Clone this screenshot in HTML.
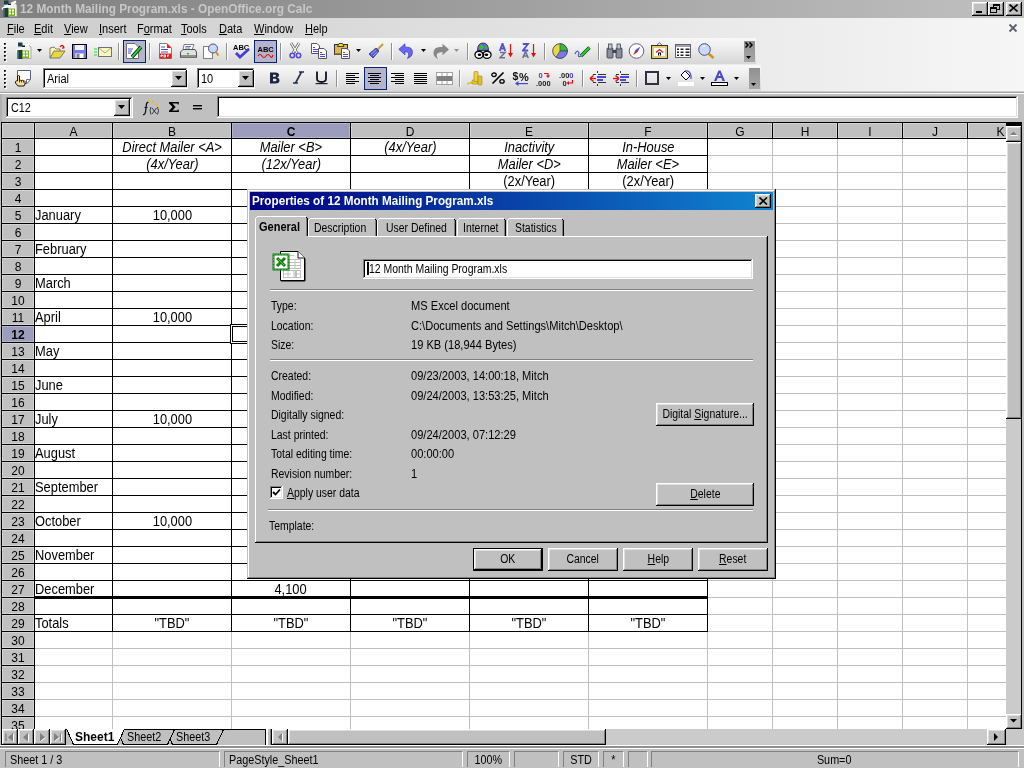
<!DOCTYPE html>
<html><head><meta charset="utf-8"><style>
html,body{margin:0;padding:0;}
body{width:1024px;height:768px;overflow:hidden;position:relative;will-change:transform;background:#c0c0c0;font-family:"Liberation Sans",sans-serif;}
div{box-sizing:border-box;}
.t{position:absolute;white-space:nowrap;font-size:12px;line-height:13px;color:#000;}
.c{position:absolute;white-space:nowrap;font-size:14px;line-height:16px;color:#000;}
u{text-decoration:underline;text-decoration-thickness:1px;text-underline-offset:1px;}
svg{position:absolute;}
</style></head><body>
<div style="position:absolute;left:0px;top:0px;width:1024px;height:18px;background:linear-gradient(to right,#808080,#c0c0c0)"></div><svg style="left:1px;top:0px" width="17" height="17" viewBox="0 0 17 17"><path d="M6 6 L13 2 L16 5 V16.5 H6 Z" fill="#f2f2f2" stroke="#909090" stroke-width="0.7"/><path d="M1 9 L8 5 L15 1.5" stroke="#ffffff" stroke-width="2.2" fill="none"/><path d="M3 6 L9 3.5" stroke="#e8e8e8" stroke-width="1.5"/><rect x="3" y="0.5" width="4.5" height="4" fill="#1c3c4c"/><rect x="7" y="3.5" width="3" height="1.5" fill="#0a1a20"/><rect x="2.5" y="8" width="5" height="9" fill="#1c3c4c"/><rect x="2.5" y="8" width="1.2" height="9" fill="#4a7080"/><rect x="7" y="8.5" width="7" height="7.5" fill="#78b020"/><rect x="8" y="9.5" width="2" height="2" fill="#fff"/><rect x="11" y="9.5" width="2" height="2" fill="#fff"/><rect x="8" y="12.5" width="2" height="2" fill="#fff"/><rect x="11" y="12.5" width="2" height="2" fill="#fff"/></svg><div class="t" style="left:20px;top:2px;transform:scaleX(0.985);transform-origin:0 0;font-weight:bold;color:#c8c8c8;font-size:12px;line-height:14px">12 Month Mailing Program.xls - OpenOffice.org Calc</div><div style="position:absolute;left:972px;top:2px;width:16px;height:14px;background:#000000"></div><div style="position:absolute;left:972px;top:2px;width:15px;height:13px;background:#ffffff"></div><div style="position:absolute;left:973px;top:3px;width:14px;height:12px;background:#808080"></div><div style="position:absolute;left:973px;top:3px;width:13px;height:11px;background:#dfdfdf"></div><div style="position:absolute;left:974px;top:4px;width:12px;height:10px;background:#c0c0c0"></div><div style="position:absolute;left:988px;top:2px;width:16px;height:14px;background:#000000"></div><div style="position:absolute;left:988px;top:2px;width:15px;height:13px;background:#ffffff"></div><div style="position:absolute;left:989px;top:3px;width:14px;height:12px;background:#808080"></div><div style="position:absolute;left:989px;top:3px;width:13px;height:11px;background:#dfdfdf"></div><div style="position:absolute;left:990px;top:4px;width:12px;height:10px;background:#c0c0c0"></div><div style="position:absolute;left:1006px;top:2px;width:16px;height:14px;background:#000000"></div><div style="position:absolute;left:1006px;top:2px;width:15px;height:13px;background:#ffffff"></div><div style="position:absolute;left:1007px;top:3px;width:14px;height:12px;background:#808080"></div><div style="position:absolute;left:1007px;top:3px;width:13px;height:11px;background:#dfdfdf"></div><div style="position:absolute;left:1008px;top:4px;width:12px;height:10px;background:#c0c0c0"></div><div style="position:absolute;left:976px;top:11px;width:6px;height:2px;background:#000"></div><svg style="left:990px;top:4px" width="12" height="10"><rect x="3.5" y="0.5" width="6" height="5" fill="none" stroke="#000"/><rect x="3" y="0" width="7" height="2" fill="#000"/>
<rect x="0.5" y="3.5" width="6" height="5" fill="#c0c0c0" stroke="#000"/><rect x="0" y="3" width="7" height="2" fill="#000"/></svg><svg style="left:1009px;top:4px" width="9" height="8"><path d="M0.5 0.5 L8.5 7.5 M8.5 0.5 L0.5 7.5" stroke="#000" stroke-width="1.6"/></svg><div style="position:absolute;left:0px;top:18px;width:1024px;height:74px;background:linear-gradient(to right,#cccccc,#f6f6f6)"></div><div class="t" style="left:7px;top:23px;transform:scaleX(0.917);transform-origin:0 0;"><u>F</u>ile</div><div class="t" style="left:34px;top:23px;transform:scaleX(0.917);transform-origin:0 0;"><u>E</u>dit</div><div class="t" style="left:64px;top:23px;transform:scaleX(0.917);transform-origin:0 0;"><u>V</u>iew</div><div class="t" style="left:99px;top:23px;transform:scaleX(0.917);transform-origin:0 0;"><u>I</u>nsert</div><div class="t" style="left:137px;top:23px;transform:scaleX(0.917);transform-origin:0 0;">F<u>o</u>rmat</div><div class="t" style="left:181px;top:23px;transform:scaleX(0.917);transform-origin:0 0;"><u>T</u>ools</div><div class="t" style="left:219px;top:23px;transform:scaleX(0.917);transform-origin:0 0;"><u>D</u>ata</div><div class="t" style="left:254px;top:23px;transform:scaleX(0.917);transform-origin:0 0;"><u>W</u>indow</div><div class="t" style="left:305px;top:23px;transform:scaleX(0.917);transform-origin:0 0;"><u>H</u>elp</div><svg style="left:1008px;top:23px" width="10" height="10"><path d="M1.5 1.5 L8.5 8.5 M8.5 1.5 L1.5 8.5" stroke="#5a6070" stroke-width="1.8"/></svg><div style="position:absolute;left:0px;top:38px;width:756px;height:26px;background:linear-gradient(to bottom,#f8f8f8,#f0f0f0 30%,#d6d6d6)"></div><div style="position:absolute;left:0px;top:65px;width:761px;height:26px;background:linear-gradient(to bottom,#f8f8f8,#f0f0f0 30%,#d6d6d6)"></div><div style="position:absolute;left:0px;top:91px;width:1024px;height:1px;background:#d0d0d0"></div><div style="position:absolute;left:0px;top:92px;width:1024px;height:1px;background:#a0a0a0"></div><div style="position:absolute;left:0px;top:93px;width:1024px;height:1px;background:#ffffff"></div><div style="position:absolute;left:5px;top:44px;width:2px;height:2px;background:#ffffff"></div><div style="position:absolute;left:4px;top:43px;width:2px;height:2px;background:#707070"></div><div style="position:absolute;left:4px;top:43px;width:1px;height:1px;background:#000"></div><div style="position:absolute;left:5px;top:43px;width:1px;height:1px;background:#303030"></div><div style="position:absolute;left:4px;top:44px;width:1px;height:1px;background:#303030"></div><div style="position:absolute;left:5px;top:48px;width:2px;height:2px;background:#ffffff"></div><div style="position:absolute;left:4px;top:47px;width:2px;height:2px;background:#707070"></div><div style="position:absolute;left:4px;top:47px;width:1px;height:1px;background:#000"></div><div style="position:absolute;left:5px;top:47px;width:1px;height:1px;background:#303030"></div><div style="position:absolute;left:4px;top:48px;width:1px;height:1px;background:#303030"></div><div style="position:absolute;left:5px;top:52px;width:2px;height:2px;background:#ffffff"></div><div style="position:absolute;left:4px;top:51px;width:2px;height:2px;background:#707070"></div><div style="position:absolute;left:4px;top:51px;width:1px;height:1px;background:#000"></div><div style="position:absolute;left:5px;top:51px;width:1px;height:1px;background:#303030"></div><div style="position:absolute;left:4px;top:52px;width:1px;height:1px;background:#303030"></div><div style="position:absolute;left:5px;top:56px;width:2px;height:2px;background:#ffffff"></div><div style="position:absolute;left:4px;top:55px;width:2px;height:2px;background:#707070"></div><div style="position:absolute;left:4px;top:55px;width:1px;height:1px;background:#000"></div><div style="position:absolute;left:5px;top:55px;width:1px;height:1px;background:#303030"></div><div style="position:absolute;left:4px;top:56px;width:1px;height:1px;background:#303030"></div><div style="position:absolute;left:5px;top:60px;width:2px;height:2px;background:#ffffff"></div><div style="position:absolute;left:4px;top:59px;width:2px;height:2px;background:#707070"></div><div style="position:absolute;left:4px;top:59px;width:1px;height:1px;background:#000"></div><div style="position:absolute;left:5px;top:59px;width:1px;height:1px;background:#303030"></div><div style="position:absolute;left:4px;top:60px;width:1px;height:1px;background:#303030"></div><div style="position:absolute;left:5px;top:71px;width:2px;height:2px;background:#ffffff"></div><div style="position:absolute;left:4px;top:70px;width:2px;height:2px;background:#707070"></div><div style="position:absolute;left:4px;top:70px;width:1px;height:1px;background:#000"></div><div style="position:absolute;left:5px;top:70px;width:1px;height:1px;background:#303030"></div><div style="position:absolute;left:4px;top:71px;width:1px;height:1px;background:#303030"></div><div style="position:absolute;left:5px;top:75px;width:2px;height:2px;background:#ffffff"></div><div style="position:absolute;left:4px;top:74px;width:2px;height:2px;background:#707070"></div><div style="position:absolute;left:4px;top:74px;width:1px;height:1px;background:#000"></div><div style="position:absolute;left:5px;top:74px;width:1px;height:1px;background:#303030"></div><div style="position:absolute;left:4px;top:75px;width:1px;height:1px;background:#303030"></div><div style="position:absolute;left:5px;top:79px;width:2px;height:2px;background:#ffffff"></div><div style="position:absolute;left:4px;top:78px;width:2px;height:2px;background:#707070"></div><div style="position:absolute;left:4px;top:78px;width:1px;height:1px;background:#000"></div><div style="position:absolute;left:5px;top:78px;width:1px;height:1px;background:#303030"></div><div style="position:absolute;left:4px;top:79px;width:1px;height:1px;background:#303030"></div><div style="position:absolute;left:5px;top:83px;width:2px;height:2px;background:#ffffff"></div><div style="position:absolute;left:4px;top:82px;width:2px;height:2px;background:#707070"></div><div style="position:absolute;left:4px;top:82px;width:1px;height:1px;background:#000"></div><div style="position:absolute;left:5px;top:82px;width:1px;height:1px;background:#303030"></div><div style="position:absolute;left:4px;top:83px;width:1px;height:1px;background:#303030"></div><div style="position:absolute;left:5px;top:87px;width:2px;height:2px;background:#ffffff"></div><div style="position:absolute;left:4px;top:86px;width:2px;height:2px;background:#707070"></div><div style="position:absolute;left:4px;top:86px;width:1px;height:1px;background:#000"></div><div style="position:absolute;left:5px;top:86px;width:1px;height:1px;background:#303030"></div><div style="position:absolute;left:4px;top:87px;width:1px;height:1px;background:#303030"></div><div style="position:absolute;left:118px;top:43px;width:1px;height:17px;background:#909090"></div><div style="position:absolute;left:119px;top:43px;width:1px;height:17px;background:#ffffff"></div><div style="position:absolute;left:149px;top:43px;width:1px;height:17px;background:#909090"></div><div style="position:absolute;left:150px;top:43px;width:1px;height:17px;background:#ffffff"></div><div style="position:absolute;left:226px;top:43px;width:1px;height:17px;background:#909090"></div><div style="position:absolute;left:227px;top:43px;width:1px;height:17px;background:#ffffff"></div><div style="position:absolute;left:280px;top:43px;width:1px;height:17px;background:#909090"></div><div style="position:absolute;left:281px;top:43px;width:1px;height:17px;background:#ffffff"></div><div style="position:absolute;left:391px;top:43px;width:1px;height:17px;background:#909090"></div><div style="position:absolute;left:392px;top:43px;width:1px;height:17px;background:#ffffff"></div><div style="position:absolute;left:467px;top:43px;width:1px;height:17px;background:#909090"></div><div style="position:absolute;left:468px;top:43px;width:1px;height:17px;background:#ffffff"></div><div style="position:absolute;left:544px;top:43px;width:1px;height:17px;background:#909090"></div><div style="position:absolute;left:545px;top:43px;width:1px;height:17px;background:#ffffff"></div><div style="position:absolute;left:598px;top:43px;width:1px;height:17px;background:#909090"></div><div style="position:absolute;left:599px;top:43px;width:1px;height:17px;background:#ffffff"></div><div style="position:absolute;left:336px;top:70px;width:1px;height:17px;background:#909090"></div><div style="position:absolute;left:337px;top:70px;width:1px;height:17px;background:#ffffff"></div><div style="position:absolute;left:459px;top:70px;width:1px;height:17px;background:#909090"></div><div style="position:absolute;left:460px;top:70px;width:1px;height:17px;background:#ffffff"></div><div style="position:absolute;left:582px;top:70px;width:1px;height:17px;background:#909090"></div><div style="position:absolute;left:583px;top:70px;width:1px;height:17px;background:#ffffff"></div><div style="position:absolute;left:636px;top:70px;width:1px;height:17px;background:#909090"></div><div style="position:absolute;left:637px;top:70px;width:1px;height:17px;background:#ffffff"></div><div style="position:absolute;left:123px;top:40px;width:23px;height:23px;background:#b4b4cc;border:1px solid #0a246a"></div><div style="position:absolute;left:254px;top:40px;width:23px;height:23px;background:#b4b4cc;border:1px solid #0a246a"></div><div style="position:absolute;left:364px;top:67px;width:23px;height:23px;background:#b4b4cc;border:1px solid #0a246a"></div><svg style="left:15px;top:42px" width="17" height="17" viewBox="0 0 17 17"><path d="M6 6 L13 2 L16 5 V16.5 H6 Z" fill="#f2f2f2" stroke="#909090" stroke-width="0.7"/><path d="M1 9 L8 5 L15 1.5" stroke="#ffffff" stroke-width="2.2" fill="none"/><path d="M3 6 L9 3.5" stroke="#e8e8e8" stroke-width="1.5"/><rect x="3" y="0.5" width="4.5" height="4" fill="#1c3c4c"/><rect x="7" y="3.5" width="3" height="1.5" fill="#0a1a20"/><rect x="2.5" y="8" width="5" height="9" fill="#1c3c4c"/><rect x="2.5" y="8" width="1.2" height="9" fill="#4a7080"/><rect x="7" y="8.5" width="7" height="7.5" fill="#78b020"/><rect x="8" y="9.5" width="2" height="2" fill="#fff"/><rect x="11" y="9.5" width="2" height="2" fill="#fff"/><rect x="8" y="12.5" width="2" height="2" fill="#fff"/><rect x="11" y="12.5" width="2" height="2" fill="#fff"/></svg><svg style="left:37px;top:49px" width="6" height="4"><path d="M0 0 H5 L2.5 3 Z" fill="#000"/></svg><svg style="left:49px;top:44px" width="17" height="15" viewBox="0 0 17 15"><path d="M11 3 Q13 0 15 3" stroke="#e01010" stroke-width="1.3" fill="none"/><path d="M14 2 L16 4 L13 5 Z" fill="#e01010"/><path d="M1 4 L5 3 L7 5 L11 5 L11 8 L1 14 Z" fill="#fff7b0" stroke="#606060" stroke-width="0.8"/><path d="M1 14 L5 7 L16 7 L11 14 Z" fill="#e8d840" stroke="#606060" stroke-width="0.8"/></svg><svg style="left:72px;top:44px" width="15" height="15" viewBox="0 0 15 15"><rect x="0.5" y="0.5" width="14" height="14" fill="#7878f0" stroke="#000"/><rect x="3" y="1" width="9" height="5" fill="#f4f4f4"/><rect x="3" y="9" width="9" height="5" fill="#c0c0c0"/><rect x="5" y="10" width="2" height="4" fill="#808080"/><rect x="8" y="10" width="3" height="4" fill="#fff"/></svg><svg style="left:94px;top:46px" width="18" height="11" viewBox="0 0 18 11"><rect x="4.5" y="1.5" width="13" height="9" fill="#fff8c0" stroke="#707080"/><path d="M5 2 L11 7 L17 2" stroke="#a09060" fill="none" stroke-width="0.8"/><path d="M0 3 H3 M0 6 H3 M0 9 H3" stroke="#20e020" stroke-width="1.2"/></svg><svg style="left:126px;top:43px" width="17" height="16" viewBox="0 0 17 16"><path d="M0.5 0.5 H9 L12.5 4 V15.5 H0.5 Z" fill="#fff" stroke="#707070"/><path d="M2 6 H7 M2 8 H6 M2 10 H5" stroke="#5050d0" stroke-width="1"/><path d="M6 14 L15 4" stroke="#000" stroke-width="3.4"/><path d="M6 14 L15 4" stroke="#30d030" stroke-width="2"/></svg><svg style="left:159px;top:43px" width="13" height="16" viewBox="0 0 13 16"><path d="M0.5 0.5 H8 L12.5 5 V15.5 H0.5 Z" fill="#fff" stroke="#808080"/><path d="M8 0.5 L12.5 5 H8 Z" fill="#e02020"/><path d="M2 4 H6 M2 6.5 H9 M2 9 H9" stroke="#5050d0" stroke-width="1"/><rect x="0.5" y="10.5" width="12" height="5" fill="#e02020"/><path d="M2 14 V12 H3.5 V13 H2 M5 14 V12 H6.5 V14 H5 M8.5 14 V12 H10 M8.5 13 H9.5" stroke="#fff" stroke-width="0.9" fill="none"/></svg><svg style="left:180px;top:44px" width="17" height="15" viewBox="0 0 17 15"><path d="M4 0.5 H14 L12 6 H3 Z" fill="#fff" stroke="#808080"/><path d="M5.5 2.5 H11 M5 4 H10" stroke="#5050d0" stroke-width="0.8"/><path d="M0.5 8 L3 5.5 H15 L16.5 8 V13.5 H0.5 Z" fill="#e0e0e0" stroke="#505050"/><rect x="1" y="11" width="15" height="2.5" fill="#909090"/><rect x="7" y="9" width="2" height="1.5" fill="#20c020"/></svg><svg style="left:203px;top:43px" width="16" height="16" viewBox="0 0 16 16"><rect x="0.5" y="3.5" width="9" height="12" fill="#fff" stroke="#808080"/><circle cx="10" cy="5.5" r="4.5" fill="#c8d8ff" stroke="#505070"/><path d="M13 9 L15.5 12.5" stroke="#d09020" stroke-width="2"/></svg><svg style="left:233px;top:43px" width="17" height="16" viewBox="0 0 17 16"><text x="0" y="6.5" font-family="Liberation Sans" font-weight="bold" font-size="7.5" fill="#000">ABC</text><path d="M3 10 L7 14 L16 6" stroke="#4040e0" stroke-width="2.8" fill="none"/></svg><svg style="left:257px;top:45px" width="17" height="14" viewBox="0 0 17 14"><text x="0.5" y="6.5" font-family="Liberation Sans" font-weight="bold" font-size="7.5" fill="#000">ABC</text><path d="M1 11 Q3 8 5 11 T9 11 T13 11 T16 10" stroke="#e01010" stroke-width="1.2" fill="none"/></svg><svg style="left:289px;top:42px" width="13" height="17" viewBox="0 0 13 17"><path d="M2 1 L8 11 M10 1 L4 11" stroke="#606068" stroke-width="2.6"/><path d="M2 1 L8 11 M10 1 L4 11" stroke="#ffffff" stroke-width="1.2"/><circle cx="3.3" cy="13.5" r="2.2" fill="none" stroke="#5848d0" stroke-width="1.6"/><circle cx="9.5" cy="13.5" r="2.2" fill="none" stroke="#5848d0" stroke-width="1.6"/></svg><svg style="left:310px;top:42px" width="18" height="18" viewBox="0 0 18 18"><path d="M1.5 1.5 H7 L9.5 4 V11.5 H1.5 Z" fill="#fff" stroke="#505868"/><path d="M3 5.5 H5 M3 7.5 H8 M3 9.5 H8" stroke="#5848d0"/><path d="M8.5 6.5 H14 L16.5 9 V16.5 H8.5 Z" fill="#fff" stroke="#505868"/><path d="M10 10.5 H12 M10 12.5 H15 M10 14.5 H15" stroke="#5848d0"/></svg><svg style="left:333px;top:42px" width="18" height="18" viewBox="0 0 18 18"><rect x="1.5" y="2.5" width="13" height="10" fill="#d8b860" stroke="#303030"/><rect x="1.5" y="11" width="13" height="1.5" fill="#a08030"/><path d="M4.5 4.5 H11 L9.5 1.5 H6 Z" fill="#f0e020" stroke="#202020" stroke-width="0.8"/><path d="M8.5 6.5 H14 L16.5 9 V16.5 H8.5 Z" fill="#fff" stroke="#505868"/><path d="M10 10.5 H12 M10 12.5 H15 M10 14.5 H15" stroke="#5848d0"/></svg><svg style="left:356px;top:49px" width="6" height="4"><path d="M0 0 H5 L2.5 3 Z" fill="#000"/></svg><svg style="left:368px;top:43px" width="16" height="16" viewBox="0 0 16 16"><path d="M9 7 L15 1" stroke="#c0a040" stroke-width="2"/><path d="M1 11 L8 5 L11 8 L5 15 Z" fill="#5858e0" stroke="#303070" stroke-width="0.8"/><path d="M3 11 L8 7 M5 13 L9 9" stroke="#c0c0ff" stroke-width="0.7"/></svg><svg style="left:398px;top:43px" width="16" height="17" viewBox="0 0 16 17"><path d="M0.8 6.3 L7 0.8 V4.2 H9 Q14.5 4.2 14.5 9.5 Q14.5 13.5 9.5 15.5 Q11.3 12.5 10.5 10.3 Q9.5 8.5 7 8.5 V11.8 Z" fill="#6868f4" stroke="#3a3ab0" stroke-width="0.7"/></svg><svg style="left:421px;top:49px" width="6" height="4"><path d="M0 0 H5 L2.5 3 Z" fill="#000"/></svg><svg style="left:432px;top:43px" width="18" height="17" viewBox="0 0 18 17"><path d="M17 6.5 L10.5 0.8 V4 H8 Q1.5 4 1.5 10 Q1.5 14 6.5 16 Q4.5 12.5 5.8 10.5 Q7 9 10.5 9 V12.2 Z" fill="#888888"/><path d="M6.3 15.5 Q4.5 12.5 5.8 10.5" stroke="#fff" stroke-width="0.8" fill="none"/></svg><svg style="left:454px;top:49px" width="6" height="4"><path d="M0 0 H5 L2.5 3 Z" fill="#909090"/></svg><svg style="left:474px;top:42px" width="18" height="18" viewBox="0 0 18 18"><path d="M3.5 8.5 Q3.5 1 9 1 Q14.5 1 14.5 8.5 Z" fill="#7060d8" stroke="#202020" stroke-width="0.8"/><path d="M5 7 Q5 3 8 2.5 L10 5 L8 7.5 Z M11 2.5 Q13 4 13.5 6 L11.5 7" fill="#20d020"/><ellipse cx="5" cy="12.8" rx="4.7" ry="4.2" fill="#000"/><ellipse cx="13" cy="12.8" rx="4.7" ry="4.2" fill="#000"/><ellipse cx="5" cy="12.8" rx="3.4" ry="2.9" fill="#fff"/><ellipse cx="13" cy="12.8" rx="3.4" ry="2.9" fill="#fff"/><ellipse cx="5.5" cy="12.8" rx="1.8" ry="1.2" fill="#000"/><ellipse cx="12.5" cy="12.8" rx="1.8" ry="1.2" fill="#000"/><path d="M8 11 L10 12.8 L8 14.6" stroke="#000" stroke-width="1.2" fill="none"/></svg><svg style="left:499px;top:43px" width="15" height="16" viewBox="0 0 15 16"><path d="M0.8 8 L3.5 0.5 L6.2 8 M1.8 5.5 H5.2" stroke="#5050d0" stroke-width="1.8" fill="none"/><path d="M1 9.5 H6 L1 14.8 H6" stroke="#707090" stroke-width="1.6" fill="none"/><path d="M11.5 1 V12" stroke="#e01010" stroke-width="1.2"/><path d="M9 10 L11.5 14.5 L14 10 Z" fill="#e01010"/></svg><svg style="left:522px;top:43px" width="15" height="16" viewBox="0 0 15 16"><path d="M0.8 1 H6 L1 7.5 H6.2" stroke="#5050d0" stroke-width="1.8" fill="none"/><path d="M0.8 15 L3.5 8.5 L6.2 15 M1.8 13 H5.2" stroke="#707090" stroke-width="1.6" fill="none"/><path d="M11.5 1 V12" stroke="#e01010" stroke-width="1.2"/><path d="M9 10 L11.5 14.5 L14 10 Z" fill="#e01010"/></svg><svg style="left:552px;top:43px" width="16" height="16" viewBox="0 0 16 16"><circle cx="8" cy="8" r="7.3" fill="#e8d840" stroke="#404060" stroke-width="0.9"/><path d="M8 8 V0.7 A7.3 7.3 0 0 1 15.3 8 Z" fill="#30c030" stroke="#404060" stroke-width="0.7"/><path d="M8 8 H15.3 A7.3 7.3 0 0 1 4 14.2 Z" fill="#7878e8" stroke="#404060" stroke-width="0.7"/></svg><svg style="left:574px;top:45px" width="17" height="14" viewBox="0 0 17 14"><path d="M1 9 Q3 4 5 8 Q3 13 7 11" stroke="#5050d0" stroke-width="1.2" fill="none"/><path d="M7 11 L15.5 2.5" stroke="#104010" stroke-width="3.4"/><path d="M7 11 L15.5 2.5" stroke="#30d030" stroke-width="2"/></svg><svg style="left:606px;top:43px" width="17" height="16" viewBox="0 0 17 16"><rect x="1" y="5" width="6" height="10" rx="1" fill="#8890a0" stroke="#303040" stroke-width="0.8"/><rect x="10" y="5" width="6" height="10" rx="1" fill="#8890a0" stroke="#303040" stroke-width="0.8"/><rect x="2.5" y="1" width="3.5" height="5" fill="#c0c8d0" stroke="#303040" stroke-width="0.7"/><rect x="11" y="1" width="3.5" height="5" fill="#c0c8d0" stroke="#303040" stroke-width="0.7"/><rect x="6.5" y="7" width="4" height="3" fill="#404050"/></svg><svg style="left:628px;top:43px" width="17" height="16" viewBox="0 0 17 16"><circle cx="8.5" cy="8" r="7.3" fill="#fff" stroke="#606080" stroke-width="1"/><path d="M12 4 L9.5 9 L5 12 L7.5 7 Z" fill="#e02020"/><path d="M12 4 L7.5 7 L9.5 9 Z" fill="#4060e0"/></svg><svg style="left:651px;top:42px" width="17" height="17" viewBox="0 0 17 17"><path d="M5.5 3.5 L8.5 0.8 L11.5 3.5" stroke="#404040" fill="none" stroke-width="0.8"/><rect x="0.5" y="3.5" width="16" height="13" fill="#e0cc70" stroke="#303030"/><rect x="3" y="6" width="11" height="8" fill="#fff"/><path d="M5 10.5 L8.5 7.5 L12 10.5" stroke="#e02020" stroke-width="1.3" fill="none"/><rect x="7" y="10.5" width="3" height="3" fill="#000"/><rect x="8" y="11.5" width="1" height="2" fill="#fff"/></svg><svg style="left:675px;top:44px" width="16" height="14" viewBox="0 0 16 14"><rect x="0.5" y="0.5" width="15" height="13" fill="#fff" stroke="#606070"/><rect x="1" y="1" width="14" height="2" fill="#a0a0b0"/><rect x="2" y="4.5" width="2" height="1.5" fill="#202020"/><rect x="5.5" y="4.5" width="3" height="1.5" fill="#202020"/><rect x="10.5" y="4.5" width="4" height="1.5" fill="#202020"/><rect x="2" y="7.5" width="2" height="1.5" fill="#202020"/><rect x="5.5" y="7.5" width="3" height="1.5" fill="#202020"/><rect x="10.5" y="7.5" width="4" height="1.5" fill="#202020"/><rect x="2" y="10.5" width="2" height="1.5" fill="#202020"/><rect x="5.5" y="10.5" width="3" height="1.5" fill="#202020"/><rect x="10.5" y="10.5" width="4" height="1.5" fill="#202020"/></svg><svg style="left:698px;top:43px" width="17" height="16" viewBox="0 0 17 16"><circle cx="6.5" cy="6.5" r="5.8" fill="#c8d8ff" stroke="#505070" stroke-width="1"/><path d="M4 4 Q5 3 7 3" stroke="#fff" stroke-width="1" fill="none"/><path d="M10.5 10.5 L15.5 15" stroke="#d09020" stroke-width="2.4"/></svg><div style="position:absolute;left:744px;top:41px;width:11px;height:21px;background:linear-gradient(to bottom,#909090,#a8a8a8)"></div><svg style="left:745px;top:42px" width="9" height="6" viewBox="0 0 9 6"><path d="M0.5 0.5 L3 3 L0.5 5.5 M4.5 0.5 L7 3 L4.5 5.5" stroke="#000" stroke-width="1.5" fill="none"/></svg><svg style="left:746px;top:56px" width="6" height="4"><path d="M0 0 H5 L2.5 3 Z" fill="#000"/></svg><div style="position:absolute;left:749px;top:68px;width:11px;height:21px;background:linear-gradient(to bottom,#909090,#a8a8a8)"></div><svg style="left:751px;top:83px" width="6" height="4"><path d="M0 0 H5 L2.5 3 Z" fill="#000"/></svg><svg style="left:14px;top:69px" width="18" height="18" viewBox="0 0 18 18"><path d="M3.5 1.5 H16.5 V10.5 L13 14.5 H10" fill="#fff" stroke="#5a6078" stroke-width="1"/><path d="M3.5 1.5 V9" stroke="#5a6078" stroke-width="1"/><rect x="4" y="2" width="12" height="9" fill="#fff"/><path d="M12.5 14 V10.5 H16" fill="#fff" stroke="#5a6078" stroke-width="0.9"/><path d="M3.5 7 Q4.5 6 5.5 7 V11.5 Q6.5 11 7.5 11.5 Q8.5 11 9.5 11.8 Q10.5 11.5 11 12.5 V15 L10 17 H4 L1.5 14 V12.5 Q2 11.5 3.5 12 Z" fill="#f8e098" stroke="#000" stroke-width="0.9"/><path d="M5.5 11.5 V13.5 M7.5 11.5 V13.5 M9.5 11.8 V13.5" stroke="#000" stroke-width="0.7"/></svg><div style="position:absolute;left:43px;top:68px;width:145px;height:21px;background:#ffffff"></div><div style="position:absolute;left:43px;top:68px;width:144px;height:20px;background:#808080"></div><div style="position:absolute;left:44px;top:69px;width:143px;height:19px;background:#dfdfdf"></div><div style="position:absolute;left:44px;top:69px;width:142px;height:18px;background:#000000"></div><div style="position:absolute;left:45px;top:70px;width:141px;height:17px;background:#ffffff"></div><div class="t" style="left:47px;top:73px;transform:scaleX(0.917);transform-origin:0 0;font-size:12px">Arial</div><div style="position:absolute;left:171px;top:70px;width:16px;height:17px;background:#000000"></div><div style="position:absolute;left:171px;top:70px;width:15px;height:16px;background:#ffffff"></div><div style="position:absolute;left:172px;top:71px;width:14px;height:15px;background:#808080"></div><div style="position:absolute;left:172px;top:71px;width:13px;height:14px;background:#dfdfdf"></div><div style="position:absolute;left:173px;top:72px;width:12px;height:13px;background:#c0c0c0"></div><svg style="left:175px;top:76px" width="7" height="4" viewBox="0 0 7 4"><path d="M0 0 H7 L3.5 4 Z" fill="#000"/></svg><div style="position:absolute;left:197px;top:68px;width:58px;height:21px;background:#ffffff"></div><div style="position:absolute;left:197px;top:68px;width:57px;height:20px;background:#808080"></div><div style="position:absolute;left:198px;top:69px;width:56px;height:19px;background:#dfdfdf"></div><div style="position:absolute;left:198px;top:69px;width:55px;height:18px;background:#000000"></div><div style="position:absolute;left:199px;top:70px;width:54px;height:17px;background:#ffffff"></div><div class="t" style="left:201px;top:73px;transform:scaleX(0.917);transform-origin:0 0;font-size:12px">10</div><div style="position:absolute;left:238px;top:70px;width:16px;height:17px;background:#000000"></div><div style="position:absolute;left:238px;top:70px;width:15px;height:16px;background:#ffffff"></div><div style="position:absolute;left:239px;top:71px;width:14px;height:15px;background:#808080"></div><div style="position:absolute;left:239px;top:71px;width:13px;height:14px;background:#dfdfdf"></div><div style="position:absolute;left:240px;top:72px;width:12px;height:13px;background:#c0c0c0"></div><svg style="left:242px;top:76px" width="7" height="4" viewBox="0 0 7 4"><path d="M0 0 H7 L3.5 4 Z" fill="#000"/></svg><svg style="left:270px;top:72px" width="10" height="12" viewBox="0 0 10 12"><path d="M0 0.5 H5.5 Q9 0.5 9 3 Q9 5 7 5.5 Q9.5 6 9.5 8.3 Q9.5 11.5 5.5 11.5 H0 Z M3 2.7 V4.7 H5 Q6 4.7 6 3.7 Q6 2.7 5 2.7 Z M3 6.8 V9.3 H5.3 Q6.5 9.3 6.5 8 Q6.5 6.8 5.3 6.8 Z" fill="#1c2440" fill-rule="evenodd"/></svg><svg style="left:292px;top:71px" width="13" height="13" viewBox="0 0 13 13"><path d="M7 1 H12 M1 12 H6 M9.5 1 L3.5 12" stroke="#283050" stroke-width="1.6" fill="none"/></svg><svg style="left:315px;top:71px" width="13" height="14" viewBox="0 0 13 14"><path d="M2 0.5 V7.5 Q2 11 6.5 11 Q11 11 11 7.5 V0.5" stroke="#101020" stroke-width="1.8" fill="none"/><rect x="0.5" y="12" width="12" height="1.2" fill="#202030"/></svg><svg style="left:346px;top:73px" width="14" height="11" viewBox="0 0 14 11"><rect x="0" y="0" width="13" height="1" fill="#000"/><rect x="0" y="2" width="9" height="1" fill="#000"/><rect x="0" y="4" width="13" height="1" fill="#000"/><rect x="0" y="6" width="9" height="1" fill="#000"/><rect x="0" y="8" width="13" height="1" fill="#000"/><rect x="0" y="10" width="9" height="1" fill="#000"/></svg><svg style="left:368px;top:73px" width="14" height="11" viewBox="0 0 14 11"><rect x="0" y="0" width="13" height="1" fill="#000"/><rect x="2" y="2" width="9" height="1" fill="#000"/><rect x="0" y="4" width="13" height="1" fill="#000"/><rect x="2" y="6" width="9" height="1" fill="#000"/><rect x="0" y="8" width="13" height="1" fill="#000"/><rect x="2" y="10" width="9" height="1" fill="#000"/></svg><svg style="left:391px;top:73px" width="14" height="11" viewBox="0 0 14 11"><rect x="0" y="0" width="13" height="1" fill="#000"/><rect x="4" y="2" width="9" height="1" fill="#000"/><rect x="0" y="4" width="13" height="1" fill="#000"/><rect x="4" y="6" width="9" height="1" fill="#000"/><rect x="0" y="8" width="13" height="1" fill="#000"/><rect x="4" y="10" width="9" height="1" fill="#000"/></svg><svg style="left:414px;top:73px" width="14" height="11" viewBox="0 0 14 11"><rect x="0" y="0" width="13" height="1" fill="#000"/><rect x="0" y="2" width="13" height="1" fill="#000"/><rect x="0" y="4" width="13" height="1" fill="#000"/><rect x="0" y="6" width="13" height="1" fill="#000"/><rect x="0" y="8" width="13" height="1" fill="#000"/><rect x="0" y="10" width="13" height="1" fill="#000"/></svg><svg style="left:436px;top:72px" width="17" height="13" viewBox="0 0 17 13"><rect x="0.5" y="0.5" width="16" height="12" fill="#fff" stroke="#a0a0a0"/><rect x="1" y="4" width="15" height="5" fill="#808080"/><path d="M6 1 V4 M11 1 V4 M6 9 V12 M11 9 V12" stroke="#a0a0a0"/></svg><svg style="left:467px;top:71px" width="16" height="15" viewBox="0 0 16 15"><path d="M0 13 Q4 11 8 12" stroke="#e0c020" stroke-width="1.5" fill="none"/><rect x="5" y="9" width="6" height="4" rx="1" fill="#e8c830" stroke="#a08010" stroke-width="0.6"/><rect x="7" y="0.5" width="4" height="10" rx="1" fill="#f0d040" stroke="#a08010" stroke-width="0.6"/><rect x="11" y="5" width="4" height="9" rx="1" fill="#e0c030" stroke="#a08010" stroke-width="0.6"/></svg><svg style="left:491px;top:72px" width="14" height="12" viewBox="0 0 14 12"><ellipse cx="3" cy="2.8" rx="2.2" ry="1.8" fill="none" stroke="#000" stroke-width="1.3"/><ellipse cx="11" cy="9.4" rx="2.2" ry="1.8" fill="none" stroke="#000" stroke-width="1.3"/><path d="M12.5 0.5 L1.5 11.5" stroke="#000" stroke-width="1.6"/></svg><svg style="left:512px;top:71px" width="18" height="15" viewBox="0 0 18 15"><text x="0.5" y="9" font-family="Liberation Sans" font-size="10.5" font-weight="bold" fill="#101010">$</text><text x="7" y="9.5" font-family="Liberation Sans" font-size="11" font-weight="bold" fill="#101010">%</text><rect x="4" y="12" width="12" height="1.2" fill="#4848d0"/><path d="M3 12.6 L6.5 10 V15 Z" fill="#4848d0"/></svg><svg style="left:536px;top:71px" width="16" height="16" viewBox="0 0 16 16"><text x="2.5" y="7" font-family="Liberation Sans" font-weight="bold" font-size="7.5" fill="#4040e0">0</text><path d="M8 2.5 H12 V5" stroke="#e01010" stroke-width="1.2" fill="none"/><path d="M10 4.5 H14 L12 7 Z" fill="#e01010"/><text x="0" y="15" font-family="Liberation Sans" font-weight="bold" font-size="7.5" fill="#202020">.000</text></svg><svg style="left:559px;top:71px" width="16" height="16" viewBox="0 0 16 16"><text x="0" y="7" font-family="Liberation Sans" font-weight="bold" font-size="7.5" fill="#202020">.00</text><text x="10.3" y="7" font-family="Liberation Sans" font-weight="bold" font-size="7.5" fill="#4040e0">0</text><text x="3.5" y="15" font-family="Liberation Sans" font-weight="bold" font-size="7.5" fill="#202020">0</text><path d="M13.5 9 V12 H9" stroke="#e01010" stroke-width="1.2" fill="none"/><path d="M10 10 V14 L7.5 12 Z" fill="#e01010"/></svg><svg style="left:589px;top:70px" width="18" height="17" viewBox="0 0 18 17"><rect x="8" y="1" width="1" height="2" fill="#303040"/><rect x="8" y="14" width="1" height="2" fill="#303040"/><rect x="4" y="4" width="3" height="1" fill="#303040"/><rect x="9" y="4" width="8" height="1" fill="#303040"/><rect x="8" y="6" width="9" height="2" fill="#4848e0"/><rect x="8" y="9" width="6" height="2" fill="#4848e0"/><rect x="4" y="12" width="3" height="1" fill="#303040"/><rect x="9" y="12" width="8" height="1" fill="#303040"/><path d="M1 8.5 L4.5 5.5 M1 8.5 L4.5 11.5" stroke="#e01010" stroke-width="1.5" fill="none"/><rect x="2" y="7.8" width="5" height="1.4" fill="#e01010"/></svg><svg style="left:612px;top:70px" width="18" height="17" viewBox="0 0 18 17"><rect x="8" y="1" width="1" height="2" fill="#303040"/><rect x="8" y="14" width="1" height="2" fill="#303040"/><rect x="4" y="4" width="3" height="1" fill="#303040"/><rect x="9" y="4" width="8" height="1" fill="#303040"/><rect x="8" y="6" width="9" height="2" fill="#4848e0"/><rect x="8" y="9" width="6" height="2" fill="#4848e0"/><rect x="4" y="12" width="3" height="1" fill="#303040"/><rect x="9" y="12" width="8" height="1" fill="#303040"/><path d="M7 8.5 L3.5 5.5 M7 8.5 L3.5 11.5" stroke="#e01010" stroke-width="1.5" fill="none"/><rect x="1" y="7.8" width="5" height="1.4" fill="#e01010"/></svg><svg style="left:645px;top:71px" width="14" height="14" viewBox="0 0 14 14"><rect x="1" y="1" width="12" height="12" fill="none" stroke="#303040" stroke-width="2"/></svg><svg style="left:666px;top:77px" width="6" height="4"><path d="M0 0 H5 L2.5 3 Z" fill="#000"/></svg><svg style="left:678px;top:70px" width="17" height="16" viewBox="0 0 17 16"><path d="M3 5 L7 1 L12 6 L8 10 Z" fill="#fff" stroke="#000" stroke-width="1"/><path d="M7 1 Q12 0 13 6 V9" stroke="#5050d0" stroke-width="1.3" fill="none"/><rect x="0" y="12" width="16" height="4" fill="#fff"/></svg><svg style="left:700px;top:77px" width="6" height="4"><path d="M0 0 H5 L2.5 3 Z" fill="#000"/></svg><svg style="left:711px;top:70px" width="17" height="16" viewBox="0 0 17 16"><path d="M3 11 L7.5 0.5 H9.5 L14 11 H11.5 L10.3 8 H6.7 L5.5 11 Z M7.4 6 H9.6 L8.5 3 Z" fill="#4848c8" fill-rule="evenodd"/><rect x="0.5" y="12.5" width="16" height="3" fill="#fff" stroke="#000"/></svg><svg style="left:734px;top:77px" width="6" height="4"><path d="M0 0 H5 L2.5 3 Z" fill="#000"/></svg><div style="position:absolute;left:0px;top:94px;width:1024px;height:28px;background:#c0c0c0"></div><div style="position:absolute;left:0px;top:94px;width:2px;height:28px;background:#b0b0b0"></div><div style="position:absolute;left:6px;top:97px;width:127px;height:21px;background:#ffffff"></div><div style="position:absolute;left:6px;top:97px;width:126px;height:20px;background:#808080"></div><div style="position:absolute;left:7px;top:98px;width:125px;height:19px;background:#dfdfdf"></div><div style="position:absolute;left:7px;top:98px;width:124px;height:18px;background:#000000"></div><div style="position:absolute;left:8px;top:99px;width:123px;height:17px;background:#ffffff"></div><div class="t" style="left:11px;top:102px;transform:scaleX(0.9);transform-origin:0 0;font-size:12px">C12</div><div style="position:absolute;left:114px;top:99px;width:16px;height:17px;background:#000000"></div><div style="position:absolute;left:114px;top:99px;width:15px;height:16px;background:#ffffff"></div><div style="position:absolute;left:115px;top:100px;width:14px;height:15px;background:#808080"></div><div style="position:absolute;left:115px;top:100px;width:13px;height:14px;background:#dfdfdf"></div><div style="position:absolute;left:116px;top:101px;width:12px;height:13px;background:#c0c0c0"></div><svg style="left:118px;top:105px" width="7" height="4" viewBox="0 0 7 4"><path d="M0 0 H7 L3.5 4 Z" fill="#000"/></svg><svg style="left:142px;top:99px" width="18" height="17" viewBox="0 0 18 17"><path d="M1 15.5 Q3 16 3.5 13 L4.5 5 Q5 3 6.5 3.5" stroke="#101020" stroke-width="1.3" fill="none"/><path d="M2.5 8.5 H5.5" stroke="#101020" stroke-width="1"/><path d="M9 8 Q7 11.5 9 15.5 M15.5 8 Q17.5 11.5 15.5 15.5 M10 9 L14.5 15 M14.5 9 L10 15" stroke="#303850" stroke-width="1" fill="none"/><path d="M5.5 1.5 h2 M6.5 0.5 v2 M9.5 2.5 h2 M10.5 1.5 v2 M13.5 5.5 h2 M14.5 4.5 v2" stroke="#f8b010" stroke-width="1"/><rect x="16" y="8" width="1" height="1.5" fill="#f8b010"/></svg><svg style="left:169px;top:102px" width="10" height="10" viewBox="0 0 10 10"><path d="M0 0.7 H9.5 M0 9.3 H9.5" stroke="#000" stroke-width="1.4"/><path d="M9.2 0 V2.5 M9.2 7.5 V10" stroke="#000" stroke-width="1"/><path d="M1 0.5 L5 5 L1 9.5" stroke="#000" stroke-width="2.4" fill="none"/></svg><div style="position:absolute;left:193px;top:105px;width:9px;height:1px;background:#000"></div><div style="position:absolute;left:193px;top:106px;width:9px;height:1px;background:#707070"></div><div style="position:absolute;left:193px;top:108px;width:9px;height:1px;background:#000"></div><div style="position:absolute;left:193px;top:109px;width:9px;height:1px;background:#707070"></div><div style="position:absolute;left:217px;top:96px;width:801px;height:22px;background:#ffffff"></div><div style="position:absolute;left:217px;top:96px;width:800px;height:21px;background:#808080"></div><div style="position:absolute;left:218px;top:97px;width:799px;height:20px;background:#dfdfdf"></div><div style="position:absolute;left:218px;top:97px;width:798px;height:19px;background:#000000"></div><div style="position:absolute;left:219px;top:98px;width:797px;height:18px;background:#ffffff"></div><div style="position:absolute;left:0px;top:122px;width:1024px;height:607px;background:#ffffff"></div><div style="position:absolute;left:0px;top:122px;width:2px;height:607px;background:#c0c0c0"></div><div style="position:absolute;left:1px;top:122px;width:1005px;height:1px;background:#000"></div><div style="position:absolute;left:1px;top:122px;width:1px;height:607px;background:#000"></div><div style="position:absolute;left:2px;top:123px;width:1004px;height:15px;background:#c0c0c0"></div><div style="position:absolute;left:232px;top:123px;width:118px;height:15px;background:#9c9cbc"></div><div style="position:absolute;left:2px;top:138px;width:32px;height:591px;background:#c0c0c0"></div><div style="position:absolute;left:2px;top:326px;width:32px;height:16px;background:#9c9cbc"></div><div style="position:absolute;left:34px;top:155px;width:972px;height:1px;background:#c0c0c0"></div><div style="position:absolute;left:34px;top:172px;width:972px;height:1px;background:#c0c0c0"></div><div style="position:absolute;left:34px;top:189px;width:972px;height:1px;background:#c0c0c0"></div><div style="position:absolute;left:34px;top:206px;width:972px;height:1px;background:#c0c0c0"></div><div style="position:absolute;left:34px;top:223px;width:972px;height:1px;background:#c0c0c0"></div><div style="position:absolute;left:34px;top:240px;width:972px;height:1px;background:#c0c0c0"></div><div style="position:absolute;left:34px;top:257px;width:972px;height:1px;background:#c0c0c0"></div><div style="position:absolute;left:34px;top:274px;width:972px;height:1px;background:#c0c0c0"></div><div style="position:absolute;left:34px;top:291px;width:972px;height:1px;background:#c0c0c0"></div><div style="position:absolute;left:34px;top:308px;width:972px;height:1px;background:#c0c0c0"></div><div style="position:absolute;left:34px;top:325px;width:972px;height:1px;background:#c0c0c0"></div><div style="position:absolute;left:34px;top:342px;width:972px;height:1px;background:#c0c0c0"></div><div style="position:absolute;left:34px;top:359px;width:972px;height:1px;background:#c0c0c0"></div><div style="position:absolute;left:34px;top:376px;width:972px;height:1px;background:#c0c0c0"></div><div style="position:absolute;left:34px;top:393px;width:972px;height:1px;background:#c0c0c0"></div><div style="position:absolute;left:34px;top:410px;width:972px;height:1px;background:#c0c0c0"></div><div style="position:absolute;left:34px;top:427px;width:972px;height:1px;background:#c0c0c0"></div><div style="position:absolute;left:34px;top:444px;width:972px;height:1px;background:#c0c0c0"></div><div style="position:absolute;left:34px;top:461px;width:972px;height:1px;background:#c0c0c0"></div><div style="position:absolute;left:34px;top:478px;width:972px;height:1px;background:#c0c0c0"></div><div style="position:absolute;left:34px;top:495px;width:972px;height:1px;background:#c0c0c0"></div><div style="position:absolute;left:34px;top:512px;width:972px;height:1px;background:#c0c0c0"></div><div style="position:absolute;left:34px;top:529px;width:972px;height:1px;background:#c0c0c0"></div><div style="position:absolute;left:34px;top:546px;width:972px;height:1px;background:#c0c0c0"></div><div style="position:absolute;left:34px;top:563px;width:972px;height:1px;background:#c0c0c0"></div><div style="position:absolute;left:34px;top:580px;width:972px;height:1px;background:#c0c0c0"></div><div style="position:absolute;left:34px;top:597px;width:972px;height:1px;background:#c0c0c0"></div><div style="position:absolute;left:34px;top:614px;width:972px;height:1px;background:#c0c0c0"></div><div style="position:absolute;left:34px;top:631px;width:972px;height:1px;background:#c0c0c0"></div><div style="position:absolute;left:34px;top:648px;width:972px;height:1px;background:#c0c0c0"></div><div style="position:absolute;left:34px;top:665px;width:972px;height:1px;background:#c0c0c0"></div><div style="position:absolute;left:34px;top:682px;width:972px;height:1px;background:#c0c0c0"></div><div style="position:absolute;left:34px;top:699px;width:972px;height:1px;background:#c0c0c0"></div><div style="position:absolute;left:34px;top:716px;width:972px;height:1px;background:#c0c0c0"></div><div style="position:absolute;left:112px;top:138px;width:1px;height:591px;background:#c0c0c0"></div><div style="position:absolute;left:231px;top:138px;width:1px;height:591px;background:#c0c0c0"></div><div style="position:absolute;left:350px;top:138px;width:1px;height:591px;background:#c0c0c0"></div><div style="position:absolute;left:469px;top:138px;width:1px;height:591px;background:#c0c0c0"></div><div style="position:absolute;left:588px;top:138px;width:1px;height:591px;background:#c0c0c0"></div><div style="position:absolute;left:707px;top:138px;width:1px;height:591px;background:#c0c0c0"></div><div style="position:absolute;left:772px;top:138px;width:1px;height:591px;background:#c0c0c0"></div><div style="position:absolute;left:837px;top:138px;width:1px;height:591px;background:#c0c0c0"></div><div style="position:absolute;left:902px;top:138px;width:1px;height:591px;background:#c0c0c0"></div><div style="position:absolute;left:967px;top:138px;width:1px;height:591px;background:#c0c0c0"></div><div style="position:absolute;left:34px;top:138px;width:674px;height:1px;background:#000"></div><div style="position:absolute;left:34px;top:155px;width:674px;height:1px;background:#000"></div><div style="position:absolute;left:34px;top:172px;width:674px;height:1px;background:#000"></div><div style="position:absolute;left:34px;top:189px;width:674px;height:1px;background:#000"></div><div style="position:absolute;left:34px;top:206px;width:674px;height:1px;background:#000"></div><div style="position:absolute;left:34px;top:223px;width:674px;height:1px;background:#000"></div><div style="position:absolute;left:34px;top:240px;width:674px;height:1px;background:#000"></div><div style="position:absolute;left:34px;top:257px;width:674px;height:1px;background:#000"></div><div style="position:absolute;left:34px;top:274px;width:674px;height:1px;background:#000"></div><div style="position:absolute;left:34px;top:291px;width:674px;height:1px;background:#000"></div><div style="position:absolute;left:34px;top:308px;width:674px;height:1px;background:#000"></div><div style="position:absolute;left:34px;top:325px;width:674px;height:1px;background:#000"></div><div style="position:absolute;left:34px;top:342px;width:674px;height:1px;background:#000"></div><div style="position:absolute;left:34px;top:359px;width:674px;height:1px;background:#000"></div><div style="position:absolute;left:34px;top:376px;width:674px;height:1px;background:#000"></div><div style="position:absolute;left:34px;top:393px;width:674px;height:1px;background:#000"></div><div style="position:absolute;left:34px;top:410px;width:674px;height:1px;background:#000"></div><div style="position:absolute;left:34px;top:427px;width:674px;height:1px;background:#000"></div><div style="position:absolute;left:34px;top:444px;width:674px;height:1px;background:#000"></div><div style="position:absolute;left:34px;top:461px;width:674px;height:1px;background:#000"></div><div style="position:absolute;left:34px;top:478px;width:674px;height:1px;background:#000"></div><div style="position:absolute;left:34px;top:495px;width:674px;height:1px;background:#000"></div><div style="position:absolute;left:34px;top:512px;width:674px;height:1px;background:#000"></div><div style="position:absolute;left:34px;top:529px;width:674px;height:1px;background:#000"></div><div style="position:absolute;left:34px;top:546px;width:674px;height:1px;background:#000"></div><div style="position:absolute;left:34px;top:563px;width:674px;height:1px;background:#000"></div><div style="position:absolute;left:34px;top:580px;width:674px;height:1px;background:#000"></div><div style="position:absolute;left:34px;top:597px;width:674px;height:1px;background:#000"></div><div style="position:absolute;left:34px;top:614px;width:674px;height:1px;background:#000"></div><div style="position:absolute;left:34px;top:631px;width:674px;height:1px;background:#000"></div><div style="position:absolute;left:34px;top:138px;width:1px;height:494px;background:#000"></div><div style="position:absolute;left:112px;top:138px;width:1px;height:494px;background:#000"></div><div style="position:absolute;left:231px;top:138px;width:1px;height:494px;background:#000"></div><div style="position:absolute;left:350px;top:138px;width:1px;height:494px;background:#000"></div><div style="position:absolute;left:469px;top:138px;width:1px;height:494px;background:#000"></div><div style="position:absolute;left:588px;top:138px;width:1px;height:494px;background:#000"></div><div style="position:absolute;left:707px;top:138px;width:1px;height:494px;background:#000"></div><div style="position:absolute;left:34px;top:596px;width:674px;height:3px;background:#000"></div><div style="position:absolute;left:35px;top:123px;width:77px;height:15px;border:1px solid #d4d4d4"></div><div style="position:absolute;left:113px;top:123px;width:118px;height:15px;border:1px solid #d4d4d4"></div><div style="position:absolute;left:232px;top:123px;width:118px;height:15px;border:1px solid #b4b4d0"></div><div style="position:absolute;left:351px;top:123px;width:118px;height:15px;border:1px solid #d4d4d4"></div><div style="position:absolute;left:470px;top:123px;width:118px;height:15px;border:1px solid #d4d4d4"></div><div style="position:absolute;left:589px;top:123px;width:118px;height:15px;border:1px solid #d4d4d4"></div><div style="position:absolute;left:708px;top:123px;width:64px;height:15px;border:1px solid #d4d4d4"></div><div style="position:absolute;left:773px;top:123px;width:64px;height:15px;border:1px solid #d4d4d4"></div><div style="position:absolute;left:838px;top:123px;width:64px;height:15px;border:1px solid #d4d4d4"></div><div style="position:absolute;left:903px;top:123px;width:64px;height:15px;border:1px solid #d4d4d4"></div><div style="position:absolute;left:968px;top:123px;width:72px;height:15px;border:1px solid #d4d4d4"></div><div style="position:absolute;left:2px;top:123px;width:32px;height:15px;border:1px solid #d4d4d4"></div><div style="position:absolute;left:2px;top:139px;width:32px;height:16px;border:1px solid #d4d4d4"></div><div style="position:absolute;left:2px;top:156px;width:32px;height:16px;border:1px solid #d4d4d4"></div><div style="position:absolute;left:2px;top:173px;width:32px;height:16px;border:1px solid #d4d4d4"></div><div style="position:absolute;left:2px;top:190px;width:32px;height:16px;border:1px solid #d4d4d4"></div><div style="position:absolute;left:2px;top:207px;width:32px;height:16px;border:1px solid #d4d4d4"></div><div style="position:absolute;left:2px;top:224px;width:32px;height:16px;border:1px solid #d4d4d4"></div><div style="position:absolute;left:2px;top:241px;width:32px;height:16px;border:1px solid #d4d4d4"></div><div style="position:absolute;left:2px;top:258px;width:32px;height:16px;border:1px solid #d4d4d4"></div><div style="position:absolute;left:2px;top:275px;width:32px;height:16px;border:1px solid #d4d4d4"></div><div style="position:absolute;left:2px;top:292px;width:32px;height:16px;border:1px solid #d4d4d4"></div><div style="position:absolute;left:2px;top:309px;width:32px;height:16px;border:1px solid #d4d4d4"></div><div style="position:absolute;left:2px;top:326px;width:32px;height:16px;border:1px solid #b4b4d0"></div><div style="position:absolute;left:2px;top:343px;width:32px;height:16px;border:1px solid #d4d4d4"></div><div style="position:absolute;left:2px;top:360px;width:32px;height:16px;border:1px solid #d4d4d4"></div><div style="position:absolute;left:2px;top:377px;width:32px;height:16px;border:1px solid #d4d4d4"></div><div style="position:absolute;left:2px;top:394px;width:32px;height:16px;border:1px solid #d4d4d4"></div><div style="position:absolute;left:2px;top:411px;width:32px;height:16px;border:1px solid #d4d4d4"></div><div style="position:absolute;left:2px;top:428px;width:32px;height:16px;border:1px solid #d4d4d4"></div><div style="position:absolute;left:2px;top:445px;width:32px;height:16px;border:1px solid #d4d4d4"></div><div style="position:absolute;left:2px;top:462px;width:32px;height:16px;border:1px solid #d4d4d4"></div><div style="position:absolute;left:2px;top:479px;width:32px;height:16px;border:1px solid #d4d4d4"></div><div style="position:absolute;left:2px;top:496px;width:32px;height:16px;border:1px solid #d4d4d4"></div><div style="position:absolute;left:2px;top:513px;width:32px;height:16px;border:1px solid #d4d4d4"></div><div style="position:absolute;left:2px;top:530px;width:32px;height:16px;border:1px solid #d4d4d4"></div><div style="position:absolute;left:2px;top:547px;width:32px;height:16px;border:1px solid #d4d4d4"></div><div style="position:absolute;left:2px;top:564px;width:32px;height:16px;border:1px solid #d4d4d4"></div><div style="position:absolute;left:2px;top:581px;width:32px;height:16px;border:1px solid #d4d4d4"></div><div style="position:absolute;left:2px;top:598px;width:32px;height:16px;border:1px solid #d4d4d4"></div><div style="position:absolute;left:2px;top:615px;width:32px;height:16px;border:1px solid #d4d4d4"></div><div style="position:absolute;left:2px;top:632px;width:32px;height:16px;border:1px solid #d4d4d4"></div><div style="position:absolute;left:2px;top:649px;width:32px;height:16px;border:1px solid #d4d4d4"></div><div style="position:absolute;left:2px;top:666px;width:32px;height:16px;border:1px solid #d4d4d4"></div><div style="position:absolute;left:2px;top:683px;width:32px;height:16px;border:1px solid #d4d4d4"></div><div style="position:absolute;left:2px;top:700px;width:32px;height:16px;border:1px solid #d4d4d4"></div><div style="position:absolute;left:2px;top:717px;width:32px;height:16px;border:1px solid #d4d4d4"></div><div style="position:absolute;left:2px;top:138px;width:1004px;height:1px;background:#000"></div><div style="position:absolute;left:34px;top:123px;width:1px;height:15px;background:#000"></div><div style="position:absolute;left:112px;top:123px;width:1px;height:15px;background:#000"></div><div style="position:absolute;left:231px;top:123px;width:1px;height:15px;background:#000"></div><div style="position:absolute;left:350px;top:123px;width:1px;height:15px;background:#000"></div><div style="position:absolute;left:469px;top:123px;width:1px;height:15px;background:#000"></div><div style="position:absolute;left:588px;top:123px;width:1px;height:15px;background:#000"></div><div style="position:absolute;left:707px;top:123px;width:1px;height:15px;background:#000"></div><div style="position:absolute;left:772px;top:123px;width:1px;height:15px;background:#000"></div><div style="position:absolute;left:837px;top:123px;width:1px;height:15px;background:#000"></div><div style="position:absolute;left:902px;top:123px;width:1px;height:15px;background:#000"></div><div style="position:absolute;left:967px;top:123px;width:1px;height:15px;background:#000"></div><div style="position:absolute;left:34px;top:138px;width:1px;height:591px;background:#000"></div><div style="position:absolute;left:2px;top:155px;width:32px;height:1px;background:#000"></div><div style="position:absolute;left:2px;top:172px;width:32px;height:1px;background:#000"></div><div style="position:absolute;left:2px;top:189px;width:32px;height:1px;background:#000"></div><div style="position:absolute;left:2px;top:206px;width:32px;height:1px;background:#000"></div><div style="position:absolute;left:2px;top:223px;width:32px;height:1px;background:#000"></div><div style="position:absolute;left:2px;top:240px;width:32px;height:1px;background:#000"></div><div style="position:absolute;left:2px;top:257px;width:32px;height:1px;background:#000"></div><div style="position:absolute;left:2px;top:274px;width:32px;height:1px;background:#000"></div><div style="position:absolute;left:2px;top:291px;width:32px;height:1px;background:#000"></div><div style="position:absolute;left:2px;top:308px;width:32px;height:1px;background:#000"></div><div style="position:absolute;left:2px;top:325px;width:32px;height:1px;background:#000"></div><div style="position:absolute;left:2px;top:342px;width:32px;height:1px;background:#000"></div><div style="position:absolute;left:2px;top:359px;width:32px;height:1px;background:#000"></div><div style="position:absolute;left:2px;top:376px;width:32px;height:1px;background:#000"></div><div style="position:absolute;left:2px;top:393px;width:32px;height:1px;background:#000"></div><div style="position:absolute;left:2px;top:410px;width:32px;height:1px;background:#000"></div><div style="position:absolute;left:2px;top:427px;width:32px;height:1px;background:#000"></div><div style="position:absolute;left:2px;top:444px;width:32px;height:1px;background:#000"></div><div style="position:absolute;left:2px;top:461px;width:32px;height:1px;background:#000"></div><div style="position:absolute;left:2px;top:478px;width:32px;height:1px;background:#000"></div><div style="position:absolute;left:2px;top:495px;width:32px;height:1px;background:#000"></div><div style="position:absolute;left:2px;top:512px;width:32px;height:1px;background:#000"></div><div style="position:absolute;left:2px;top:529px;width:32px;height:1px;background:#000"></div><div style="position:absolute;left:2px;top:546px;width:32px;height:1px;background:#000"></div><div style="position:absolute;left:2px;top:563px;width:32px;height:1px;background:#000"></div><div style="position:absolute;left:2px;top:580px;width:32px;height:1px;background:#000"></div><div style="position:absolute;left:2px;top:597px;width:32px;height:1px;background:#000"></div><div style="position:absolute;left:2px;top:614px;width:32px;height:1px;background:#000"></div><div style="position:absolute;left:2px;top:631px;width:32px;height:1px;background:#000"></div><div style="position:absolute;left:2px;top:648px;width:32px;height:1px;background:#000"></div><div style="position:absolute;left:2px;top:665px;width:32px;height:1px;background:#000"></div><div style="position:absolute;left:2px;top:682px;width:32px;height:1px;background:#000"></div><div style="position:absolute;left:2px;top:699px;width:32px;height:1px;background:#000"></div><div style="position:absolute;left:2px;top:716px;width:32px;height:1px;background:#000"></div><div class="t" style="left:35px;top:125px;width:77px;text-align:center;font-size:12px;line-height:14px;">A</div><div class="t" style="left:113px;top:125px;width:118px;text-align:center;font-size:12px;line-height:14px;">B</div><div class="t" style="left:232px;top:125px;width:118px;text-align:center;font-size:12px;line-height:14px;font-weight:bold;">C</div><div class="t" style="left:351px;top:125px;width:118px;text-align:center;font-size:12px;line-height:14px;">D</div><div class="t" style="left:470px;top:125px;width:118px;text-align:center;font-size:12px;line-height:14px;">E</div><div class="t" style="left:589px;top:125px;width:118px;text-align:center;font-size:12px;line-height:14px;">F</div><div class="t" style="left:708px;top:125px;width:64px;text-align:center;font-size:12px;line-height:14px;">G</div><div class="t" style="left:773px;top:125px;width:64px;text-align:center;font-size:12px;line-height:14px;">H</div><div class="t" style="left:838px;top:125px;width:64px;text-align:center;font-size:12px;line-height:14px;">I</div><div class="t" style="left:903px;top:125px;width:64px;text-align:center;font-size:12px;line-height:14px;">J</div><div class="t" style="left:968px;top:125px;width:65px;text-align:center;font-size:12px;line-height:14px;overflow:visible">K</div><div class="t" style="left:2px;top:141px;width:32px;height:14px;text-align:center;font-size:12px;line-height:14px;overflow:hidden;">1</div><div class="t" style="left:2px;top:158px;width:32px;height:14px;text-align:center;font-size:12px;line-height:14px;overflow:hidden;">2</div><div class="t" style="left:2px;top:175px;width:32px;height:14px;text-align:center;font-size:12px;line-height:14px;overflow:hidden;">3</div><div class="t" style="left:2px;top:192px;width:32px;height:14px;text-align:center;font-size:12px;line-height:14px;overflow:hidden;">4</div><div class="t" style="left:2px;top:209px;width:32px;height:14px;text-align:center;font-size:12px;line-height:14px;overflow:hidden;">5</div><div class="t" style="left:2px;top:226px;width:32px;height:14px;text-align:center;font-size:12px;line-height:14px;overflow:hidden;">6</div><div class="t" style="left:2px;top:243px;width:32px;height:14px;text-align:center;font-size:12px;line-height:14px;overflow:hidden;">7</div><div class="t" style="left:2px;top:260px;width:32px;height:14px;text-align:center;font-size:12px;line-height:14px;overflow:hidden;">8</div><div class="t" style="left:2px;top:277px;width:32px;height:14px;text-align:center;font-size:12px;line-height:14px;overflow:hidden;">9</div><div class="t" style="left:2px;top:294px;width:32px;height:14px;text-align:center;font-size:12px;line-height:14px;overflow:hidden;">10</div><div class="t" style="left:2px;top:311px;width:32px;height:14px;text-align:center;font-size:12px;line-height:14px;overflow:hidden;">11</div><div class="t" style="left:2px;top:328px;width:32px;height:14px;text-align:center;font-size:12px;line-height:14px;overflow:hidden;font-weight:bold;">12</div><div class="t" style="left:2px;top:345px;width:32px;height:14px;text-align:center;font-size:12px;line-height:14px;overflow:hidden;">13</div><div class="t" style="left:2px;top:362px;width:32px;height:14px;text-align:center;font-size:12px;line-height:14px;overflow:hidden;">14</div><div class="t" style="left:2px;top:379px;width:32px;height:14px;text-align:center;font-size:12px;line-height:14px;overflow:hidden;">15</div><div class="t" style="left:2px;top:396px;width:32px;height:14px;text-align:center;font-size:12px;line-height:14px;overflow:hidden;">16</div><div class="t" style="left:2px;top:413px;width:32px;height:14px;text-align:center;font-size:12px;line-height:14px;overflow:hidden;">17</div><div class="t" style="left:2px;top:430px;width:32px;height:14px;text-align:center;font-size:12px;line-height:14px;overflow:hidden;">18</div><div class="t" style="left:2px;top:447px;width:32px;height:14px;text-align:center;font-size:12px;line-height:14px;overflow:hidden;">19</div><div class="t" style="left:2px;top:464px;width:32px;height:14px;text-align:center;font-size:12px;line-height:14px;overflow:hidden;">20</div><div class="t" style="left:2px;top:481px;width:32px;height:14px;text-align:center;font-size:12px;line-height:14px;overflow:hidden;">21</div><div class="t" style="left:2px;top:498px;width:32px;height:14px;text-align:center;font-size:12px;line-height:14px;overflow:hidden;">22</div><div class="t" style="left:2px;top:515px;width:32px;height:14px;text-align:center;font-size:12px;line-height:14px;overflow:hidden;">23</div><div class="t" style="left:2px;top:532px;width:32px;height:14px;text-align:center;font-size:12px;line-height:14px;overflow:hidden;">24</div><div class="t" style="left:2px;top:549px;width:32px;height:14px;text-align:center;font-size:12px;line-height:14px;overflow:hidden;">25</div><div class="t" style="left:2px;top:566px;width:32px;height:14px;text-align:center;font-size:12px;line-height:14px;overflow:hidden;">26</div><div class="t" style="left:2px;top:583px;width:32px;height:14px;text-align:center;font-size:12px;line-height:14px;overflow:hidden;">27</div><div class="t" style="left:2px;top:600px;width:32px;height:14px;text-align:center;font-size:12px;line-height:14px;overflow:hidden;">28</div><div class="t" style="left:2px;top:617px;width:32px;height:14px;text-align:center;font-size:12px;line-height:14px;overflow:hidden;">29</div><div class="t" style="left:2px;top:634px;width:32px;height:14px;text-align:center;font-size:12px;line-height:14px;overflow:hidden;">30</div><div class="t" style="left:2px;top:651px;width:32px;height:14px;text-align:center;font-size:12px;line-height:14px;overflow:hidden;">31</div><div class="t" style="left:2px;top:668px;width:32px;height:14px;text-align:center;font-size:12px;line-height:14px;overflow:hidden;">32</div><div class="t" style="left:2px;top:685px;width:32px;height:14px;text-align:center;font-size:12px;line-height:14px;overflow:hidden;">33</div><div class="t" style="left:2px;top:702px;width:32px;height:14px;text-align:center;font-size:12px;line-height:14px;overflow:hidden;">34</div><div class="t" style="left:2px;top:719px;width:32px;height:14px;text-align:center;font-size:12px;line-height:14px;overflow:hidden;">35</div><div class="c" style="left:113px;top:139px;width:118px;text-align:center;font-style:italic"><span style="display:inline-block;transform:scaleX(0.92)">Direct Mailer &lt;A&gt;</span></div><div class="c" style="left:232px;top:139px;width:118px;text-align:center;font-style:italic"><span style="display:inline-block;transform:scaleX(0.92)">Mailer &lt;B&gt;</span></div><div class="c" style="left:351px;top:139px;width:118px;text-align:center;font-style:italic"><span style="display:inline-block;transform:scaleX(0.92)">(4x/Year)</span></div><div class="c" style="left:470px;top:139px;width:118px;text-align:center;font-style:italic"><span style="display:inline-block;transform:scaleX(0.92)">Inactivity</span></div><div class="c" style="left:589px;top:139px;width:118px;text-align:center;font-style:italic"><span style="display:inline-block;transform:scaleX(0.92)">In-House</span></div><div class="c" style="left:113px;top:156px;width:118px;text-align:center;font-style:italic"><span style="display:inline-block;transform:scaleX(0.92)">(4x/Year)</span></div><div class="c" style="left:232px;top:156px;width:118px;text-align:center;font-style:italic"><span style="display:inline-block;transform:scaleX(0.92)">(12x/Year)</span></div><div class="c" style="left:470px;top:156px;width:118px;text-align:center;font-style:italic"><span style="display:inline-block;transform:scaleX(0.92)">Mailer &lt;D&gt;</span></div><div class="c" style="left:589px;top:156px;width:118px;text-align:center;font-style:italic"><span style="display:inline-block;transform:scaleX(0.92)">Mailer &lt;E&gt;</span></div><div class="c" style="left:470px;top:173px;width:118px;text-align:center;"><span style="display:inline-block;transform:scaleX(0.92)">(2x/Year)</span></div><div class="c" style="left:589px;top:173px;width:118px;text-align:center;"><span style="display:inline-block;transform:scaleX(0.92)">(2x/Year)</span></div><div class="c" style="left:35px;top:207px;transform:scaleX(0.92);transform-origin:0 0;">January</div><div class="c" style="left:35px;top:241px;transform:scaleX(0.92);transform-origin:0 0;">February</div><div class="c" style="left:35px;top:275px;transform:scaleX(0.92);transform-origin:0 0;">March</div><div class="c" style="left:35px;top:309px;transform:scaleX(0.92);transform-origin:0 0;">April</div><div class="c" style="left:35px;top:343px;transform:scaleX(0.92);transform-origin:0 0;">May</div><div class="c" style="left:35px;top:377px;transform:scaleX(0.92);transform-origin:0 0;">June</div><div class="c" style="left:35px;top:411px;transform:scaleX(0.92);transform-origin:0 0;">July</div><div class="c" style="left:35px;top:445px;transform:scaleX(0.92);transform-origin:0 0;">August</div><div class="c" style="left:35px;top:479px;transform:scaleX(0.92);transform-origin:0 0;">September</div><div class="c" style="left:35px;top:513px;transform:scaleX(0.92);transform-origin:0 0;">October</div><div class="c" style="left:35px;top:547px;transform:scaleX(0.92);transform-origin:0 0;">November</div><div class="c" style="left:35px;top:581px;transform:scaleX(0.92);transform-origin:0 0;">December</div><div class="c" style="left:113px;top:207px;width:118px;text-align:center;"><span style="display:inline-block;transform:scaleX(0.92)">10,000</span></div><div class="c" style="left:113px;top:309px;width:118px;text-align:center;"><span style="display:inline-block;transform:scaleX(0.92)">10,000</span></div><div class="c" style="left:113px;top:411px;width:118px;text-align:center;"><span style="display:inline-block;transform:scaleX(0.92)">10,000</span></div><div class="c" style="left:113px;top:513px;width:118px;text-align:center;"><span style="display:inline-block;transform:scaleX(0.92)">10,000</span></div><div class="c" style="left:232px;top:581px;width:118px;text-align:center;"><span style="display:inline-block;transform:scaleX(0.92)">4,100</span></div><div class="c" style="left:35px;top:615px;transform:scaleX(0.92);transform-origin:0 0;">Totals</div><div class="c" style="left:113px;top:615px;width:118px;text-align:center;"><span style="display:inline-block;transform:scaleX(0.92)">"TBD"</span></div><div class="c" style="left:232px;top:615px;width:118px;text-align:center;"><span style="display:inline-block;transform:scaleX(0.92)">"TBD"</span></div><div class="c" style="left:351px;top:615px;width:118px;text-align:center;"><span style="display:inline-block;transform:scaleX(0.92)">"TBD"</span></div><div class="c" style="left:470px;top:615px;width:118px;text-align:center;"><span style="display:inline-block;transform:scaleX(0.92)">"TBD"</span></div><div class="c" style="left:589px;top:615px;width:118px;text-align:center;"><span style="display:inline-block;transform:scaleX(0.92)">"TBD"</span></div><div style="position:absolute;left:230px;top:324px;width:122px;height:20px;border:1px solid #000"></div><div style="position:absolute;left:231px;top:325px;width:1px;height:18px;background:#fff"></div><div style="position:absolute;left:231px;top:325px;width:120px;height:1px;background:#fff"></div><div style="position:absolute;left:231px;top:342px;width:120px;height:1px;background:#fff"></div><div style="position:absolute;left:350px;top:325px;width:1px;height:18px;background:#fff"></div><div style="position:absolute;left:232px;top:326px;width:118px;height:16px;border:1px solid #000"></div><div style="position:absolute;left:1006px;top:122px;width:18px;height:607px;background:#cbcbcb"></div><div style="position:absolute;left:1022px;top:94px;width:2px;height:635px;background:#c0c0c0"></div><div style="position:absolute;left:1006px;top:122px;width:16px;height:4px;background:#000"></div><div style="position:absolute;left:1021px;top:122px;width:1px;height:607px;background:#000"></div><div style="position:absolute;left:1006px;top:126px;width:16px;height:16px;background:#000000"></div><div style="position:absolute;left:1006px;top:126px;width:15px;height:15px;background:#ffffff"></div><div style="position:absolute;left:1007px;top:127px;width:14px;height:14px;background:#808080"></div><div style="position:absolute;left:1007px;top:127px;width:13px;height:13px;background:#dfdfdf"></div><div style="position:absolute;left:1008px;top:128px;width:12px;height:12px;background:#c0c0c0"></div><svg style="left:1010px;top:131px" width="8" height="5" viewBox="0 0 8 5"><path d="M0 4 H7 L3.5 0.5 Z" fill="#808080"/><path d="M0.5 4.5 H7.5" stroke="#fff"/></svg><div style="position:absolute;left:1006px;top:142px;width:16px;height:277px;background:#000000"></div><div style="position:absolute;left:1006px;top:142px;width:15px;height:276px;background:#ffffff"></div><div style="position:absolute;left:1007px;top:143px;width:14px;height:275px;background:#808080"></div><div style="position:absolute;left:1007px;top:143px;width:13px;height:274px;background:#dfdfdf"></div><div style="position:absolute;left:1008px;top:144px;width:12px;height:273px;background:#c0c0c0"></div><div style="position:absolute;left:1006px;top:714px;width:16px;height:15px;background:#000000"></div><div style="position:absolute;left:1006px;top:714px;width:15px;height:14px;background:#ffffff"></div><div style="position:absolute;left:1007px;top:715px;width:14px;height:13px;background:#808080"></div><div style="position:absolute;left:1007px;top:715px;width:13px;height:12px;background:#dfdfdf"></div><div style="position:absolute;left:1008px;top:716px;width:12px;height:11px;background:#c0c0c0"></div><svg style="left:1010px;top:719px" width="8" height="5" viewBox="0 0 8 5"><path d="M0 0 H7 L3.5 3.5 Z" fill="#000"/></svg><div style="position:absolute;left:0px;top:729px;width:1006px;height:16px;background:#c0c0c0"></div><div style="position:absolute;left:1px;top:729px;width:1px;height:16px;background:#000"></div><div style="position:absolute;left:2px;top:729px;width:16px;height:16px;background:#000000"></div><div style="position:absolute;left:2px;top:729px;width:15px;height:15px;background:#ffffff"></div><div style="position:absolute;left:3px;top:730px;width:14px;height:14px;background:#808080"></div><div style="position:absolute;left:3px;top:730px;width:13px;height:13px;background:#dfdfdf"></div><div style="position:absolute;left:4px;top:731px;width:12px;height:12px;background:#c0c0c0"></div><div style="position:absolute;left:18px;top:729px;width:16px;height:16px;background:#000000"></div><div style="position:absolute;left:18px;top:729px;width:15px;height:15px;background:#ffffff"></div><div style="position:absolute;left:19px;top:730px;width:14px;height:14px;background:#808080"></div><div style="position:absolute;left:19px;top:730px;width:13px;height:13px;background:#dfdfdf"></div><div style="position:absolute;left:20px;top:731px;width:12px;height:12px;background:#c0c0c0"></div><div style="position:absolute;left:34px;top:729px;width:16px;height:16px;background:#000000"></div><div style="position:absolute;left:34px;top:729px;width:15px;height:15px;background:#ffffff"></div><div style="position:absolute;left:35px;top:730px;width:14px;height:14px;background:#808080"></div><div style="position:absolute;left:35px;top:730px;width:13px;height:13px;background:#dfdfdf"></div><div style="position:absolute;left:36px;top:731px;width:12px;height:12px;background:#c0c0c0"></div><div style="position:absolute;left:50px;top:729px;width:16px;height:16px;background:#000000"></div><div style="position:absolute;left:50px;top:729px;width:15px;height:15px;background:#ffffff"></div><div style="position:absolute;left:51px;top:730px;width:14px;height:14px;background:#808080"></div><div style="position:absolute;left:51px;top:730px;width:13px;height:13px;background:#dfdfdf"></div><div style="position:absolute;left:52px;top:731px;width:12px;height:12px;background:#c0c0c0"></div><svg style="left:5px;top:733px" width="10" height="9" viewBox="0 0 10 9"><path d="M1 0.5 V8" stroke="#808080" stroke-width="1.3"/><path d="M8 0 V8.5 L3 4.25 Z" fill="#808080"/><path d="M8.5 1 V9" stroke="#fff"/></svg><svg style="left:22px;top:733px" width="8" height="9" viewBox="0 0 8 9"><path d="M6 0 V8.5 L1 4.25 Z" fill="#808080"/><path d="M6.5 1 V9" stroke="#fff"/></svg><svg style="left:39px;top:733px" width="8" height="9" viewBox="0 0 8 9"><path d="M1 0 V8.5 L6 4.25 Z" fill="#808080"/><path d="M1.5 8.5 L6.5 4.5" stroke="#fff"/></svg><svg style="left:53px;top:733px" width="10" height="9" viewBox="0 0 10 9"><path d="M1 0 V8.5 L6 4.25 Z" fill="#808080"/><path d="M7.5 0.5 V8" stroke="#808080" stroke-width="1.3"/><path d="M1.5 8.5 L6.5 4.5 M8.5 1 V9" stroke="#fff"/></svg><svg style="left:64px;top:729px" width="210" height="16" viewBox="64 729 210 16" shape-rendering="crispEdges">
<path d="M66 729.5 H265.5 V744.5 H66 Z" fill="#c0c0c0"/>
<path d="M265.5 729 V745" stroke="#000"/>
<path d="M165.5 729.5 L172.5 744.5 H216.5 L223.5 729.5" fill="#c0c0c0" stroke="#000"/>
<path d="M116.5 729.5 L123.5 744.5 H167.5 L174.5 729.5" fill="#c0c0c0" stroke="#000"/>
<path d="M66 729.5 H265" stroke="#000"/>
<path d="M66 729 L73 744.5 H118 L125 729 Z" fill="#ffffff"/>
<path d="M66.5 729 L73.5 744.5 H117.5 L124.5 729" fill="none" stroke="#000"/>
</svg><div class="t" style="left:75px;top:730px;transform:scaleX(1.0);transform-origin:0 0;font-weight:bold;font-size:12px;line-height:14px">Sheet1</div><div class="t" style="left:127px;top:730px;transform:scaleX(0.9);transform-origin:0 0;font-size:12px;line-height:14px">Sheet2</div><div class="t" style="left:176px;top:730px;transform:scaleX(0.9);transform-origin:0 0;font-size:12px;line-height:14px">Sheet3</div><div style="position:absolute;left:266px;top:729px;width:2px;height:16px;background:#fff"></div><div style="position:absolute;left:268px;top:729px;width:3px;height:16px;background:#c0c0c0"></div><div style="position:absolute;left:270px;top:729px;width:1px;height:16px;background:#808080"></div><div style="position:absolute;left:271px;top:729px;width:1px;height:16px;background:#000"></div><div style="position:absolute;left:272px;top:729px;width:16px;height:16px;background:#000000"></div><div style="position:absolute;left:272px;top:729px;width:15px;height:15px;background:#ffffff"></div><div style="position:absolute;left:273px;top:730px;width:14px;height:14px;background:#808080"></div><div style="position:absolute;left:273px;top:730px;width:13px;height:13px;background:#dfdfdf"></div><div style="position:absolute;left:274px;top:731px;width:12px;height:12px;background:#c0c0c0"></div><svg style="left:277px;top:733px" width="6" height="9" viewBox="0 0 6 9"><path d="M5 0 V8 L1 4 Z" fill="#808080"/><path d="M5.5 0.5 V8.5" stroke="#fff"/></svg><div style="position:absolute;left:288px;top:729px;width:718px;height:16px;background:#cbcbcb"></div><div style="position:absolute;left:288px;top:729px;width:318px;height:16px;background:#000000"></div><div style="position:absolute;left:288px;top:729px;width:317px;height:15px;background:#ffffff"></div><div style="position:absolute;left:289px;top:730px;width:316px;height:14px;background:#808080"></div><div style="position:absolute;left:289px;top:730px;width:315px;height:13px;background:#dfdfdf"></div><div style="position:absolute;left:290px;top:731px;width:314px;height:12px;background:#c0c0c0"></div><div style="position:absolute;left:987px;top:729px;width:19px;height:16px;background:#000000"></div><div style="position:absolute;left:987px;top:729px;width:18px;height:15px;background:#ffffff"></div><div style="position:absolute;left:988px;top:730px;width:17px;height:14px;background:#808080"></div><div style="position:absolute;left:988px;top:730px;width:16px;height:13px;background:#dfdfdf"></div><div style="position:absolute;left:989px;top:731px;width:15px;height:12px;background:#c0c0c0"></div><svg style="left:993px;top:733px" width="6" height="9" viewBox="0 0 6 9"><path d="M1 0 V8 L5 4 Z" fill="#000"/></svg><div style="position:absolute;left:1006px;top:729px;width:18px;height:16px;background:#c8c8c8"></div><div style="position:absolute;left:0px;top:745px;width:1024px;height:23px;background:#c0c0c0"></div><div style="position:absolute;left:0px;top:745px;width:1024px;height:1px;background:#ffffff"></div><div style="position:absolute;left:0px;top:746px;width:1024px;height:2px;background:#909090"></div><div style="position:absolute;left:0px;top:748px;width:1024px;height:1px;background:#ffffff"></div><div style="position:absolute;left:5px;top:751px;width:215px;height:16px;border-top:1px solid #808080;border-left:1px solid #808080;border-right:1px solid #fff"></div><div class="t" style="left:10px;top:754px;transform:scaleX(0.9);transform-origin:0 0;">Sheet 1 / 3</div><div style="position:absolute;left:224px;top:751px;width:239px;height:16px;border-top:1px solid #808080;border-left:1px solid #808080;border-right:1px solid #fff"></div><div class="t" style="left:229px;top:754px;transform:scaleX(0.9);transform-origin:0 0;">PageStyle_Sheet1</div><div style="position:absolute;left:467px;top:751px;width:43px;height:16px;border-top:1px solid #808080;border-left:1px solid #808080;border-right:1px solid #fff"></div><div class="t" style="left:467px;top:754px;width:42px;text-align:center;"><span style="display:inline-block;transform:scaleX(0.9)">100%</span></div><div style="position:absolute;left:514px;top:751px;width:45px;height:16px;border-top:1px solid #808080;border-left:1px solid #808080;border-right:1px solid #fff"></div><div style="position:absolute;left:563px;top:751px;width:36px;height:16px;border-top:1px solid #808080;border-left:1px solid #808080;border-right:1px solid #fff"></div><div class="t" style="left:563px;top:754px;width:35px;text-align:center;"><span style="display:inline-block;transform:scaleX(0.9)">STD</span></div><div style="position:absolute;left:603px;top:751px;width:21px;height:16px;border-top:1px solid #808080;border-left:1px solid #808080;border-right:1px solid #fff"></div><div class="t" style="left:603px;top:754px;width:20px;text-align:center;"><span style="display:inline-block;transform:scaleX(0.9)">*</span></div><div style="position:absolute;left:628px;top:751px;width:20px;height:16px;border-top:1px solid #808080;border-left:1px solid #808080;border-right:1px solid #fff"></div><div style="position:absolute;left:651px;top:751px;width:368px;height:16px;border-top:1px solid #808080;border-left:1px solid #808080;border-right:1px solid #fff"></div><div class="t" style="left:651px;top:754px;width:367px;text-align:center;"><span style="display:inline-block;transform:scaleX(0.9)">Sum=0</span></div><div style="position:absolute;left:247px;top:189px;width:529px;height:390px;background:#000000"></div><div style="position:absolute;left:247px;top:189px;width:528px;height:389px;background:#c0c0c0"></div><div style="position:absolute;left:248px;top:190px;width:527px;height:388px;background:#808080"></div><div style="position:absolute;left:248px;top:190px;width:526px;height:387px;background:#ffffff"></div><div style="position:absolute;left:249px;top:191px;width:525px;height:386px;background:#c0c0c0"></div><div style="position:absolute;left:250px;top:192px;width:523px;height:18px;background:linear-gradient(to right,#000080,#1084d0)"></div><div class="t" style="left:252px;top:194px;transform:scaleX(0.975);transform-origin:0 0;font-weight:bold;color:#fff;font-size:12px;line-height:14px">Properties of 12 Month Mailing Program.xls</div><div style="position:absolute;left:755px;top:194px;width:16px;height:14px;background:#000000"></div><div style="position:absolute;left:755px;top:194px;width:15px;height:13px;background:#ffffff"></div><div style="position:absolute;left:756px;top:195px;width:14px;height:12px;background:#808080"></div><div style="position:absolute;left:756px;top:195px;width:13px;height:11px;background:#dfdfdf"></div><div style="position:absolute;left:757px;top:196px;width:12px;height:10px;background:#c0c0c0"></div><svg style="left:759px;top:197px" width="9" height="8" viewBox="0 0 9 8"><path d="M0.5 0.5 L8 7.5 M8 0.5 L0.5 7.5" stroke="#000" stroke-width="1.6"/></svg><div style="position:absolute;left:255px;top:236px;width:513px;height:307px;background:#000000"></div><div style="position:absolute;left:255px;top:236px;width:512px;height:306px;background:#ffffff"></div><div style="position:absolute;left:256px;top:237px;width:511px;height:305px;background:#808080"></div><div style="position:absolute;left:256px;top:237px;width:510px;height:304px;background:#c0c0c0"></div><div style="position:absolute;left:257px;top:238px;width:509px;height:303px;background:#c0c0c0"></div><div style="position:absolute;left:308px;top:218px;width:69px;height:18px;background:#c0c0c0"></div><div style="position:absolute;left:308px;top:220px;width:1px;height:16px;background:#fff"></div><div style="position:absolute;left:309px;top:219px;width:1px;height:1px;background:#fff"></div><div style="position:absolute;left:310px;top:218px;width:65px;height:1px;background:#fff"></div><div style="position:absolute;left:375px;top:219px;width:1px;height:1px;background:#000"></div><div style="position:absolute;left:376px;top:220px;width:1px;height:16px;background:#000"></div><div style="position:absolute;left:375px;top:220px;width:1px;height:16px;background:#808080"></div><div class="t" style="left:314px;top:222px;transform:scaleX(0.87);transform-origin:0 0;">Description</div><div style="position:absolute;left:377px;top:218px;width:79px;height:18px;background:#c0c0c0"></div><div style="position:absolute;left:377px;top:220px;width:1px;height:16px;background:#fff"></div><div style="position:absolute;left:378px;top:219px;width:1px;height:1px;background:#fff"></div><div style="position:absolute;left:379px;top:218px;width:75px;height:1px;background:#fff"></div><div style="position:absolute;left:454px;top:219px;width:1px;height:1px;background:#000"></div><div style="position:absolute;left:455px;top:220px;width:1px;height:16px;background:#000"></div><div style="position:absolute;left:454px;top:220px;width:1px;height:16px;background:#808080"></div><div class="t" style="left:386px;top:222px;transform:scaleX(0.87);transform-origin:0 0;">User Defined</div><div style="position:absolute;left:457px;top:218px;width:49px;height:18px;background:#c0c0c0"></div><div style="position:absolute;left:457px;top:220px;width:1px;height:16px;background:#fff"></div><div style="position:absolute;left:458px;top:219px;width:1px;height:1px;background:#fff"></div><div style="position:absolute;left:459px;top:218px;width:45px;height:1px;background:#fff"></div><div style="position:absolute;left:504px;top:219px;width:1px;height:1px;background:#000"></div><div style="position:absolute;left:505px;top:220px;width:1px;height:16px;background:#000"></div><div style="position:absolute;left:504px;top:220px;width:1px;height:16px;background:#808080"></div><div class="t" style="left:463px;top:222px;transform:scaleX(0.87);transform-origin:0 0;">Internet</div><div style="position:absolute;left:507px;top:218px;width:57px;height:18px;background:#c0c0c0"></div><div style="position:absolute;left:507px;top:220px;width:1px;height:16px;background:#fff"></div><div style="position:absolute;left:508px;top:219px;width:1px;height:1px;background:#fff"></div><div style="position:absolute;left:509px;top:218px;width:53px;height:1px;background:#fff"></div><div style="position:absolute;left:562px;top:219px;width:1px;height:1px;background:#000"></div><div style="position:absolute;left:563px;top:220px;width:1px;height:16px;background:#000"></div><div style="position:absolute;left:562px;top:220px;width:1px;height:16px;background:#808080"></div><div class="t" style="left:515px;top:222px;transform:scaleX(0.87);transform-origin:0 0;">Statistics</div><div style="position:absolute;left:255px;top:216px;width:53px;height:21px;background:#c0c0c0"></div><div style="position:absolute;left:255px;top:218px;width:1px;height:19px;background:#fff"></div><div style="position:absolute;left:256px;top:217px;width:1px;height:1px;background:#fff"></div><div style="position:absolute;left:257px;top:216px;width:49px;height:1px;background:#fff"></div><div style="position:absolute;left:306px;top:217px;width:1px;height:1px;background:#000"></div><div style="position:absolute;left:307px;top:218px;width:1px;height:18px;background:#000"></div><div style="position:absolute;left:306px;top:218px;width:1px;height:18px;background:#808080"></div><div style="position:absolute;left:256px;top:236px;width:50px;height:2px;background:#c0c0c0"></div><div class="t" style="left:259px;top:220px;transform:scaleX(0.917);transform-origin:0 0;font-weight:bold;font-size:12px;line-height:14px">General</div><svg style="left:272px;top:251px" width="34" height="31" viewBox="0 0 34 31"><path d="M8.5 0.5 H26 L32.5 7 V29.5 H8.5 Z" fill="#fff" stroke="#000"/><path d="M9 30 H33 V7.5" stroke="#000" stroke-width="1" fill="none"/><path d="M26 0.5 V7 H32.5" fill="#fff" stroke="#000" stroke-width="0.9"/><path d="M17 4.5 H22" stroke="#c0c0c0"/><rect x="17.5" y="8.5" width="11" height="9" fill="none" stroke="#c0c0c0"/><path d="M17.5 11.5 H28.5 M17.5 14.5 H28.5 M23 8.5 V17.5" stroke="#c0c0c0"/><rect x="11.5" y="19.5" width="17" height="7" fill="none" stroke="#c0c0c0"/><path d="M11.5 23 H19 M16 19.5 V26.5 M22 19.5 V26.5 M22 23 H28.5" stroke="#c0c0c0"/><rect x="23" y="20" width="2" height="6" fill="#c0c0c0"/><rect x="1.5" y="3.5" width="15" height="15" fill="#fff" stroke="#108010" stroke-width="2"/><rect x="1.5" y="3.5" width="15" height="15" fill="none" stroke="#80c080" stroke-width="1" stroke-dasharray="1 2"/><path d="M5 7 L13 15 M13 7 L5 15" stroke="#108010" stroke-width="3"/><path d="M6 8 L12 14" stroke="#90d090" stroke-width="0.7"/></svg><div style="position:absolute;left:363px;top:259px;width:390px;height:20px;background:#ffffff"></div><div style="position:absolute;left:363px;top:259px;width:389px;height:19px;background:#808080"></div><div style="position:absolute;left:364px;top:260px;width:388px;height:18px;background:#dfdfdf"></div><div style="position:absolute;left:364px;top:260px;width:387px;height:17px;background:#000000"></div><div style="position:absolute;left:365px;top:261px;width:386px;height:16px;background:#ffffff"></div><div style="position:absolute;left:367px;top:262px;width:2px;height:13px;background:#000"></div><div class="t" style="left:369px;top:263px;transform:scaleX(0.87);transform-origin:0 0;">12 Month Mailing Program.xls</div><div style="position:absolute;left:270px;top:289px;width:483px;height:1px;background:#808080"></div><div style="position:absolute;left:270px;top:290px;width:483px;height:1px;background:#fff"></div><div style="position:absolute;left:270px;top:359px;width:483px;height:1px;background:#808080"></div><div style="position:absolute;left:270px;top:360px;width:483px;height:1px;background:#fff"></div><div style="position:absolute;left:268px;top:509px;width:485px;height:1px;background:#808080"></div><div style="position:absolute;left:268px;top:510px;width:485px;height:1px;background:#fff"></div><div class="t" style="left:271px;top:300px;transform:scaleX(0.87);transform-origin:0 0;">Type:</div><div class="t" style="left:411px;top:300px;transform:scaleX(0.925);transform-origin:0 0;">MS Excel document</div><div class="t" style="left:271px;top:320px;transform:scaleX(0.87);transform-origin:0 0;">Location:</div><div class="t" style="left:411px;top:320px;transform:scaleX(0.925);transform-origin:0 0;">C:\Documents and Settings\Mitch\Desktop\</div><div class="t" style="left:271px;top:339px;transform:scaleX(0.87);transform-origin:0 0;">Size:</div><div class="t" style="left:411px;top:339px;transform:scaleX(0.925);transform-origin:0 0;">19 KB (18,944 Bytes)</div><div class="t" style="left:271px;top:370px;transform:scaleX(0.87);transform-origin:0 0;">Created:</div><div class="t" style="left:411px;top:370px;transform:scaleX(0.925);transform-origin:0 0;">09/23/2003, 14:00:18, Mitch</div><div class="t" style="left:271px;top:390px;transform:scaleX(0.87);transform-origin:0 0;">Modified:</div><div class="t" style="left:411px;top:390px;transform:scaleX(0.925);transform-origin:0 0;">09/24/2003, 13:53:25, Mitch</div><div class="t" style="left:271px;top:409px;transform:scaleX(0.87);transform-origin:0 0;">Digitally signed:</div><div class="t" style="left:271px;top:429px;transform:scaleX(0.87);transform-origin:0 0;">Last printed:</div><div class="t" style="left:411px;top:429px;transform:scaleX(0.925);transform-origin:0 0;">09/24/2003, 07:12:29</div><div class="t" style="left:271px;top:448px;transform:scaleX(0.87);transform-origin:0 0;">Total editing time:</div><div class="t" style="left:411px;top:448px;transform:scaleX(0.925);transform-origin:0 0;">00:00:00</div><div class="t" style="left:271px;top:468px;transform:scaleX(0.87);transform-origin:0 0;">Revision number:</div><div class="t" style="left:411px;top:468px;transform:scaleX(0.925);transform-origin:0 0;">1</div><div style="position:absolute;left:270px;top:486px;width:13px;height:13px;background:#ffffff"></div><div style="position:absolute;left:270px;top:486px;width:12px;height:12px;background:#808080"></div><div style="position:absolute;left:271px;top:487px;width:11px;height:11px;background:#dfdfdf"></div><div style="position:absolute;left:271px;top:487px;width:10px;height:10px;background:#000000"></div><div style="position:absolute;left:272px;top:488px;width:9px;height:9px;background:#ffffff"></div><svg style="left:272px;top:488px" width="9" height="9" viewBox="0 0 9 9"><path d="M1 4 L3.5 6.5 L8 1.5" stroke="#000" stroke-width="1.8" fill="none"/></svg><div class="t" style="left:287px;top:487px;transform:scaleX(0.87);transform-origin:0 0;"><u>A</u>pply user data</div><div class="t" style="left:269px;top:520px;transform:scaleX(0.87);transform-origin:0 0;">Template:</div><div style="position:absolute;left:656px;top:403px;width:98px;height:23px;background:#000000"></div><div style="position:absolute;left:656px;top:403px;width:97px;height:22px;background:#ffffff"></div><div style="position:absolute;left:657px;top:404px;width:96px;height:21px;background:#808080"></div><div style="position:absolute;left:657px;top:404px;width:95px;height:20px;background:#dfdfdf"></div><div style="position:absolute;left:658px;top:405px;width:94px;height:19px;background:#c0c0c0"></div><div class="t" style="left:656px;top:408px;width:98px;text-align:center;"><span style="display:inline-block;transform:scaleX(0.87)">Digital <u>S</u>ignature...</span></div><div style="position:absolute;left:656px;top:483px;width:98px;height:23px;background:#000000"></div><div style="position:absolute;left:656px;top:483px;width:97px;height:22px;background:#ffffff"></div><div style="position:absolute;left:657px;top:484px;width:96px;height:21px;background:#808080"></div><div style="position:absolute;left:657px;top:484px;width:95px;height:20px;background:#dfdfdf"></div><div style="position:absolute;left:658px;top:485px;width:94px;height:19px;background:#c0c0c0"></div><div class="t" style="left:656px;top:488px;width:98px;text-align:center;"><span style="display:inline-block;transform:scaleX(0.87)"><u>D</u>elete</span></div><div style="position:absolute;left:473px;top:548px;width:70px;height:23px;background:#000"></div><div style="position:absolute;left:474px;top:549px;width:68px;height:21px;background:#000000"></div><div style="position:absolute;left:474px;top:549px;width:67px;height:20px;background:#ffffff"></div><div style="position:absolute;left:475px;top:550px;width:66px;height:19px;background:#808080"></div><div style="position:absolute;left:475px;top:550px;width:65px;height:18px;background:#dfdfdf"></div><div style="position:absolute;left:476px;top:551px;width:64px;height:17px;background:#c0c0c0"></div><div class="t" style="left:473px;top:553px;width:70px;text-align:center;"><span style="display:inline-block;transform:scaleX(0.87)">OK</span></div><div style="position:absolute;left:548px;top:548px;width:70px;height:23px;background:#000000"></div><div style="position:absolute;left:548px;top:548px;width:69px;height:22px;background:#ffffff"></div><div style="position:absolute;left:549px;top:549px;width:68px;height:21px;background:#808080"></div><div style="position:absolute;left:549px;top:549px;width:67px;height:20px;background:#dfdfdf"></div><div style="position:absolute;left:550px;top:550px;width:66px;height:19px;background:#c0c0c0"></div><div class="t" style="left:548px;top:553px;width:70px;text-align:center;"><span style="display:inline-block;transform:scaleX(0.87)">Cancel</span></div><div style="position:absolute;left:623px;top:548px;width:70px;height:23px;background:#000000"></div><div style="position:absolute;left:623px;top:548px;width:69px;height:22px;background:#ffffff"></div><div style="position:absolute;left:624px;top:549px;width:68px;height:21px;background:#808080"></div><div style="position:absolute;left:624px;top:549px;width:67px;height:20px;background:#dfdfdf"></div><div style="position:absolute;left:625px;top:550px;width:66px;height:19px;background:#c0c0c0"></div><div class="t" style="left:623px;top:553px;width:70px;text-align:center;"><span style="display:inline-block;transform:scaleX(0.87)"><u>H</u>elp</span></div><div style="position:absolute;left:698px;top:548px;width:70px;height:23px;background:#000000"></div><div style="position:absolute;left:698px;top:548px;width:69px;height:22px;background:#ffffff"></div><div style="position:absolute;left:699px;top:549px;width:68px;height:21px;background:#808080"></div><div style="position:absolute;left:699px;top:549px;width:67px;height:20px;background:#dfdfdf"></div><div style="position:absolute;left:700px;top:550px;width:66px;height:19px;background:#c0c0c0"></div><div class="t" style="left:698px;top:553px;width:70px;text-align:center;"><span style="display:inline-block;transform:scaleX(0.87)"><u>R</u>eset</span></div>
</body></html>
